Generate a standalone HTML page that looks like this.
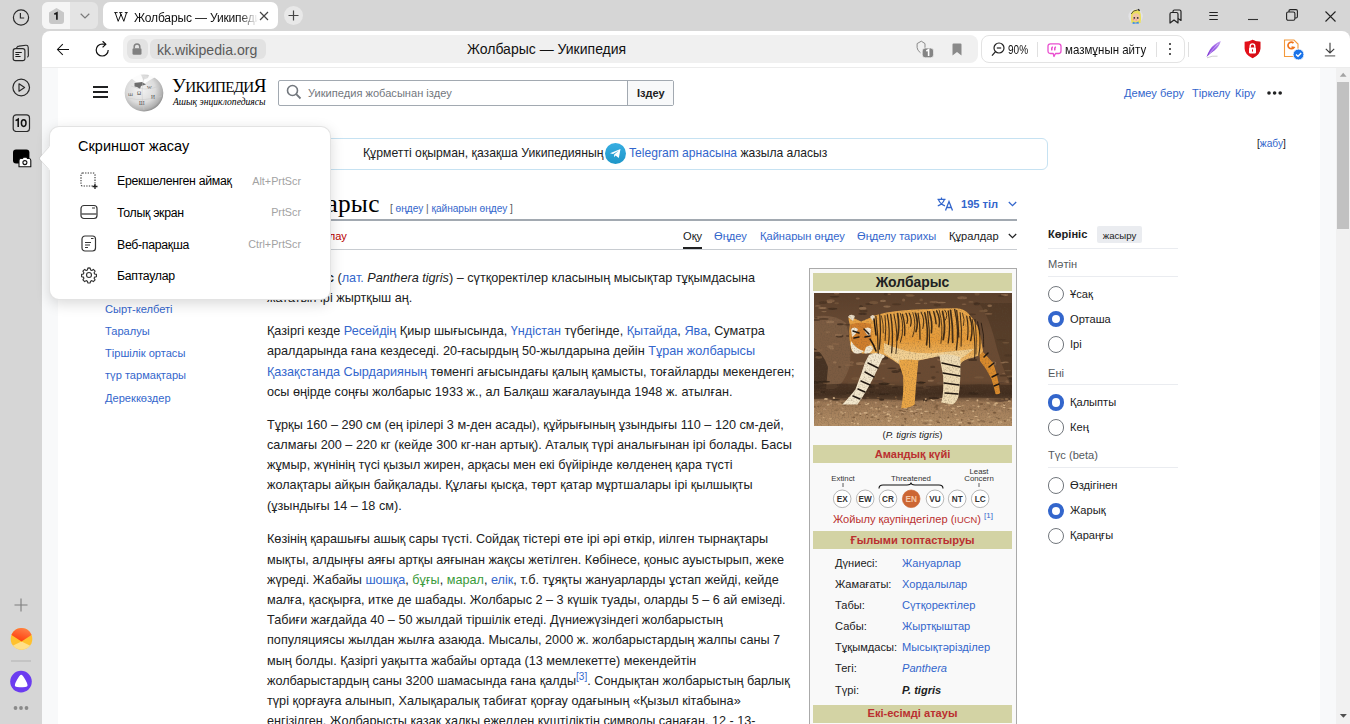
<!DOCTYPE html>
<html><head><meta charset="utf-8">
<style>
*{box-sizing:border-box}
html,body{margin:0;padding:0}
body{width:1350px;height:724px;overflow:hidden;position:relative;background:#d6d6d6;font-family:"Liberation Sans",sans-serif;color:#202122}
.abs{position:absolute}
.nw{white-space:nowrap}
a,.lk{color:#3366cc;text-decoration:none}
.g{color:#3a9a3a}
</style></head><body>

<!-- ============ LEFT SIDEBAR ============ -->
<div id="sidebar" class="abs" style="left:0;top:0;width:42px;height:724px;background:#d6d6d6">
  <svg class="abs" style="left:12px;top:9px" width="18" height="18" viewBox="0 0 18 18"><circle cx="9" cy="8.5" r="7.6" fill="none" stroke="#2a2a2a" stroke-width="1.2"/><path d="M8.4 3.9 V9 H12.2" fill="none" stroke="#2a2a2a" stroke-width="1.2"/></svg>
  <svg class="abs" style="left:12px;top:44px" width="18" height="18" viewBox="0 0 18 18"><path d="M4.4 4.3 L5.2 3 Q5.8 2.2 7 2.1 L13.8 1.3 Q16 1.1 16.2 3.2 L16.4 11.6 Q16.4 12.8 15.2 13.2" fill="none" stroke="#2a2a2a" stroke-width="1.15"/><rect x="1.2" y="4.6" width="11.7" height="12" rx="2.2" fill="#dedede" stroke="#2a2a2a" stroke-width="1.15"/><path d="M3.4 8.5 H9.8 M3.4 10.5 H7.2 M3.4 12.5 H8.6" stroke="#1a1a1a" stroke-width="1"/></svg>
  <svg class="abs" style="left:12px;top:78px" width="19" height="19" viewBox="0 0 19 19"><circle cx="9.2" cy="9.5" r="8.3" fill="none" stroke="#2a2a2a" stroke-width="1.2"/><path d="M7 5.8 L12.6 9.5 L7 13.2 Z" fill="none" stroke="#2a2a2a" stroke-width="1.2" stroke-linejoin="round"/></svg>
  <svg class="abs" style="left:12px;top:113px" width="19" height="19" viewBox="0 0 19 19"><rect x="1.2" y="1.9" width="16.3" height="16.6" rx="3" fill="none" stroke="#2a2a2a" stroke-width="1.2"/><path d="M3.6 7.6 L6.2 6.2 V14" fill="none" stroke="#111" stroke-width="1.6"/><ellipse cx="11.7" cy="10.1" rx="2.3" ry="3.3" fill="none" stroke="#111" stroke-width="1.5"/></svg>
  <svg class="abs" style="left:12px;top:149px" width="20" height="19" viewBox="0 0 20 19"><rect x="1" y="0.6" width="16.4" height="13.8" rx="3" fill="#000"/><path d="M7 17.8 V11.5 Q7 9.5 9 9.5 H10.5 L11.5 8.2 H14.5 L15.5 9.5 H17 Q18.8 9.5 18.8 11.5 V17.8 Z" fill="#fff" stroke="#111" stroke-width="1.1" stroke-linejoin="round"/><circle cx="12.9" cy="13.6" r="2" fill="none" stroke="#111" stroke-width="1.1"/></svg>
  <svg class="abs" style="left:14px;top:598px" width="14" height="14" viewBox="0 0 14 14"><path d="M7 0.5 V13.5 M0.5 7 H13.5" stroke="#7d7d7d" stroke-width="1.1"/></svg>
  <svg class="abs" style="left:10px;top:627px" width="23" height="23" viewBox="0 0 23 23"><defs><linearGradient id="mg" x1="0.8" y1="0" x2="0.3" y2="1"><stop offset="0" stop-color="#ff8a50"/><stop offset="1" stop-color="#ff3a0a"/></linearGradient><clipPath id="mc"><circle cx="11.5" cy="11.9" r="10.8"/></clipPath></defs><g clip-path="url(#mc)"><rect width="23" height="23" fill="#ffc12e"/><path d="M0 20 L11.5 14.4 L23 20 V23 H0 Z" fill="#ffe08a"/><path d="M0 0 H23 V7 L11.5 14.4 L0 7 Z" fill="url(#mg)"/></g></svg>
  <div class="abs" style="left:11px;top:660px;width:20px;height:2px;background:#c4c4c4"></div>
  <svg class="abs" style="left:10px;top:670px" width="23" height="23" viewBox="0 0 23 23"><circle cx="11" cy="11.6" r="10.8" fill="#6b3cf0"/><path d="M11.2 4.8 Q12.6 4.8 15.5 10 Q18.6 15.6 17 16.6 Q15.5 17.5 11.2 17.3 Q6.9 17.5 5.4 16.6 Q3.8 15.6 6.9 10 Q9.8 4.8 11.2 4.8 Z" fill="#fff"/></svg>
  <svg class="abs" style="left:13px;top:705px" width="16" height="6" viewBox="0 0 16 6"><circle cx="2.5" cy="3" r="1.9" fill="#8a8a8a"/><circle cx="8" cy="3" r="1.9" fill="#8a8a8a"/><circle cx="13.5" cy="3" r="1.9" fill="#8a8a8a"/></svg>
</div>

<!-- ============ TAB STRIP ============ -->
<div id="tabs" class="abs" style="left:42px;top:0;width:1308px;height:31px;background:#d6d6d6">
  <div class="abs" style="left:0;top:2px;width:56px;height:27px;border-radius:6px;background:#e4e4e4"></div>
  <div class="abs" style="left:0;top:2px;width:28px;height:27px;border-radius:6px 0 0 6px;background:#f5f5f5"></div>
  <svg class="abs" style="left:7px;top:8px" width="15" height="16" viewBox="0 0 15 16"><path d="M7.5 0 L15 4.5 V13 Q15 16 12 16 H3 Q0 16 0 13 V4.5 Z" fill="#c8c8c8"/><path d="M5.3 6.3 L7.9 5 V11.7" fill="none" stroke="#1a1a1a" stroke-width="1.7"/></svg>
  <svg class="abs" style="left:38px;top:13px" width="10" height="6" viewBox="0 0 10 6"><path d="M0.7 0.8 L5 5 L9.3 0.8" fill="none" stroke="#7a7a7a" stroke-width="1.2"/></svg>
  <div class="abs" style="left:61px;top:2px;width:175px;height:27px;border-radius:7px;background:#fff"></div>
  <svg class="abs" style="left:72px;top:12px" width="14" height="10" viewBox="0 0 14 10"><path d="M0.3 0.6 H3.6 M1.2 0.6 L4.2 9.3 L7 2.2 L9.8 9.3 L12.6 0.6 M10.8 0.6 H13.7 M5.3 0.6 H8.4 M6 0.6 L7.2 3.2" fill="none" stroke="#111" stroke-width="1"/></svg>
  <div class="abs nw" style="left:92px;top:10.5px;width:124px;overflow:hidden;font-size:12px;line-height:14px;color:#111;letter-spacing:-0.15px;-webkit-mask-image:linear-gradient(to right,#000 85%,transparent 100%)">Жолбарыс — Уикипедия</div>
  <svg class="abs" style="left:217px;top:11px" width="10" height="10" viewBox="0 0 10 10"><path d="M1 1 L9 9 M9 1 L1 9" stroke="#444" stroke-width="1.2"/></svg>
  <div class="abs" style="left:242px;top:6px;width:19px;height:19px;border-radius:50%;background:#e8e8e8"></div>
  <svg class="abs" style="left:246px;top:10px" width="11" height="11" viewBox="0 0 11 11"><path d="M5.5 0.5 V10.5 M0.5 5.5 H10.5" stroke="#444" stroke-width="1.2"/></svg>
  <!-- right window controls -->
  <svg class="abs" style="left:1086px;top:8px" width="16" height="17" viewBox="0 0 16 17"><circle cx="7.6" cy="8.3" r="7.2" fill="#e2e2e6"/><path d="M3 9 Q2.5 3 7 1.8 Q12 1 12.8 6.5 Q13.5 11 12.5 15 L3.5 15 Q2.8 12 3 9 Z" fill="#eadf5a"/><path d="M3.2 6 Q5 2 9.5 2" fill="none" stroke="#4a4438" stroke-width="0.9"/><path d="M10 1.3 L11.6 2.8" stroke="#222" stroke-width="1.4"/><path d="M4.4 10 Q4.2 5.5 8 5.3 Q11.8 5.5 11.7 10 Q11.4 13.4 8 13.6 Q4.6 13.4 4.4 10 Z" fill="#f1c6a6"/><circle cx="6.3" cy="9.9" r="0.9" fill="#333"/><circle cx="9.7" cy="9.9" r="0.9" fill="#333"/><circle cx="5.6" cy="11.4" r="0.8" fill="#ee8aa0"/><circle cx="8.2" cy="12" r="0.7" fill="#ee8aa0"/><path d="M4.8 13.8 L7.6 14.8 L10.6 13.6 L10.8 15.8 L7.6 15.4 L4.6 16 Z" fill="#3a8be8"/></svg>
  <svg class="abs" style="left:1127px;top:9px" width="14" height="15" viewBox="0 0 14 15"><path d="M1 5 Q1 3.5 2.5 3.5 H7.5 Q9 3.5 9 5 V14 L5 11 L1 14 Z" fill="none" stroke="#222" stroke-width="1.2" stroke-linejoin="round"/><path d="M4 3.5 V2.5 Q4 1 5.5 1 H10.5 Q12 1 12 2.5 V11.5 L9 9.5" fill="none" stroke="#222" stroke-width="1.2" stroke-linejoin="round"/></svg>
  <svg class="abs" style="left:1167px;top:11px" width="10" height="10" viewBox="0 0 10 10"><path d="M0.3 1.5 H8.8 M0.3 4.5 H8.8 M0.3 8.5 H8.8" stroke="#222" stroke-width="1.05"/></svg>
  <svg class="abs" style="left:1206px;top:18px" width="10" height="3" viewBox="0 0 10 3"><path d="M0 1.5 H10" stroke="#333" stroke-width="1.1"/></svg>
  <svg class="abs" style="left:1244px;top:9px" width="12" height="12" viewBox="0 0 12 12"><rect x="0.6" y="3" width="8.3" height="8.3" rx="1.5" fill="none" stroke="#222" stroke-width="1.1"/><path d="M3 3 V2 Q3 0.6 4.4 0.6 H10 Q11.4 0.6 11.4 2 V7.6 Q11.4 9 10 9 H8.9" fill="none" stroke="#222" stroke-width="1.1"/></svg>
  <svg class="abs" style="left:1283px;top:11px" width="11" height="11" viewBox="0 0 11 11"><path d="M0.5 0.5 L10.5 10.5 M10.5 0.5 L0.5 10.5" stroke="#222" stroke-width="1.1"/></svg>
</div>

<!-- ============ TOOLBAR ============ -->
<div id="toolbar" class="abs" style="left:42px;top:31px;width:1308px;height:37px;background:#fff;border-radius:8px 8px 0 0">
  <svg class="abs" style="left:14px;top:12px" width="14" height="13" viewBox="0 0 14 13"><path d="M13 6.5 H1.5 M6.8 1.2 L1.5 6.5 L6.8 11.8" fill="none" stroke="#111" stroke-width="1.05"/></svg>
  <svg class="abs" style="left:53px;top:10px" width="16" height="17" viewBox="0 0 16 17"><path d="M13.2 9 A6 6 0 1 1 7.2 3 L10.6 3.3" fill="none" stroke="#111" stroke-width="1.2"/><path d="M7.6 0.2 L10.8 3.3 L7.6 6.4" fill="none" stroke="#111" stroke-width="1.2"/></svg>
  <div class="abs" style="left:81px;top:4px;width:855px;height:28px;border-radius:8px;background:#f0f0f0"></div>
  <div class="abs" style="left:85px;top:8px;width:21px;height:20px;border-radius:6px;background:#e2e2e2"></div>
  <svg class="abs" style="left:90px;top:12px" width="10" height="12" viewBox="0 0 10 12"><path d="M2.2 5.5 V3.8 A2.8 2.8 0 0 1 7.8 3.8 V5.5" fill="none" stroke="#808080" stroke-width="1.5"/><rect x="0.5" y="5.2" width="9" height="6.5" rx="1.3" fill="#808080"/></svg>
  <div class="abs" style="left:108px;top:8px;width:116px;height:20px;border-radius:6px;background:#e2e2e2"></div>
  <div class="abs nw" style="left:115px;top:11px;font-size:14.1px;line-height:17px;color:#5a5a5a">kk.wikipedia.org</div>
  <div class="abs nw" style="left:425px;top:10px;font-size:14px;line-height:17px;color:#111">Жолбарыс — Уикипедия</div>
  <svg class="abs" style="left:873px;top:8px" width="20" height="20" viewBox="0 0 20 20"><path d="M10 10 V4.6 L6.3 2.2 L2.1 4.6 V8.5 Q2.2 11.5 5.5 13.8" fill="none" stroke="#8a8a8a" stroke-width="1"/><rect x="7.2" y="9" width="11.4" height="9.8" rx="3" fill="#858585" stroke="#f0f0f0" stroke-width="0.8"/><path d="M11.3 12 L13.6 10.6 V17" fill="none" stroke="#fff" stroke-width="1.6"/></svg>
  <svg class="abs" style="left:910px;top:12px" width="10" height="13" viewBox="0 0 10 13"><path d="M0.5 1.5 Q0.5 0.5 1.5 0.5 H8.5 Q9.5 0.5 9.5 1.5 V12.5 L5 9 L0.5 12.5 Z" fill="#8a8a8a"/></svg>
  <div class="abs" style="left:939px;top:4px;width:204px;height:28px;border-radius:8px;background:#fff;border:1px solid #e3e3e3"></div>
  <svg class="abs" style="left:949px;top:11px" width="14" height="15" viewBox="0 0 14 15"><circle cx="8" cy="6" r="5" fill="none" stroke="#222" stroke-width="1.2"/><path d="M5.8 6 H10.2" stroke="#222" stroke-width="1.2"/><path d="M4.5 9.6 L1 13.6" stroke="#222" stroke-width="1.3"/></svg>
  <div class="abs nw" style="left:966px;top:10.5px;font-size:12.4px;line-height:17px;color:#111;transform:scaleX(0.81);transform-origin:0 0">90%</div>
  <div class="abs" style="left:995px;top:11px;width:1px;height:15px;background:#e0e0e0"></div>
  <svg class="abs" style="left:1004.5px;top:12px" width="15" height="15" viewBox="0 0 15 15"><path d="M3.5 0.8 H11.5 Q14 0.8 14 3.3 V8 Q14 10.5 11.5 10.5 H8.5 L7 13.5 L6.2 10.5 H3.5 Q1 10.5 1 8 V3.3 Q1 0.8 3.5 0.8 Z" fill="none" stroke="#e94fcf" stroke-width="1.3" stroke-linejoin="round"/><path d="M5.3 4.2 Q4.5 5 4.8 6.8 M8.3 4.2 Q7.5 5 7.8 6.8" stroke="#e94fcf" stroke-width="1.6" fill="none" stroke-linecap="round"/></svg>
  <div class="abs nw" style="left:1022.5px;top:9.5px;font-size:13.6px;line-height:17px;color:#111;transform:scaleX(0.845);transform-origin:0 0">мазмұнын айту</div>
  <div class="abs" style="left:1114px;top:11px;width:1px;height:15px;background:#e0e0e0"></div>
  <svg class="abs" style="left:1126px;top:11px" width="4" height="14" viewBox="0 0 4 14"><circle cx="2" cy="2" r="1" fill="#222"/><circle cx="2" cy="7" r="1" fill="#222"/><circle cx="2" cy="12" r="1" fill="#222"/></svg>
  <div class="abs" style="left:1146px;top:11px;width:1px;height:15px;background:#e0e0e0"></div>
  <svg class="abs" style="left:1163px;top:9px" width="18" height="19" viewBox="0 0 18 19"><defs><linearGradient id="fg" x1="0" y1="1" x2="1" y2="0"><stop offset="0" stop-color="#7a2fd0"/><stop offset="0.55" stop-color="#9b5ee6"/><stop offset="1" stop-color="#c9a8f2"/></linearGradient></defs><path d="M15.8 1 Q9 3.5 5 9.5 Q2.5 13.5 1.5 17 Q5.5 13 9.5 10.5 Q14.5 6.5 15.8 1 Z" fill="url(#fg)"/><path d="M13 4 Q9 8 4.5 13.5" stroke="#e6d6fa" stroke-width="0.6" fill="none"/><path d="M2 17.8 Q7 15.5 12.5 16.2" stroke="#d0d0d0" stroke-width="1" fill="none"/></svg>
  <svg class="abs" style="left:1202px;top:8px" width="18" height="20" viewBox="0 0 18 20"><path d="M8.5 0.8 Q12 2.8 16.4 2.8 V9.5 Q16.4 15.5 8.5 19.2 Q0.6 15.5 0.6 9.5 V2.8 Q5 2.8 8.5 0.8 Z" fill="#e3101a"/><path d="M8.5 0.8 Q12 2.8 16.4 2.8 V9.5 Q16.4 15.5 8.5 19.2 Z" fill="#c80a12" opacity="0.5"/><path d="M6.2 8.8 V7.2 A2.3 2.3 0 0 1 10.8 7.2 V8.8" fill="none" stroke="#fff" stroke-width="1.4"/><rect x="5" y="8.6" width="7" height="5.8" rx="0.8" fill="#fff"/><rect x="8" y="10.4" width="1" height="2.2" fill="#e3101a"/></svg>
  <svg class="abs" style="left:1241px;top:8px" width="22" height="22" viewBox="0 0 22 22"><path d="M1.5 1 H11 L15 5 V17.5 H1.5 Z" fill="#fff" stroke="#f39a3c" stroke-width="1.1"/><path d="M10.5 4 A3.3 3.3 0 1 0 10.8 8.6 L8.5 8.2" fill="none" stroke="#f0741b" stroke-width="1.7"/><circle cx="15.5" cy="15.5" r="5.5" fill="#1a73e8" stroke="#fff" stroke-width="1"/><path d="M13 15.5 L15 17.3 L18.2 14" fill="none" stroke="#fff" stroke-width="1.3"/></svg>
  <svg class="abs" style="left:1282px;top:11px" width="12" height="15" viewBox="0 0 12 15"><path d="M6 0.8 V11 M1.8 6.8 L6 11 L10.2 6.8" fill="none" stroke="#3a3a3a" stroke-width="1.1"/><path d="M0.8 13.9 H11.2" stroke="#5a5a5a" stroke-width="1.1"/></svg>
</div>
<div class="abs" style="left:42px;top:67px;width:1308px;height:1px;background:#ececec"></div>

<!-- ============ PAGE ============ -->
<div id="page" class="abs" style="left:42px;top:68px;width:1294px;height:656px;background:#fff;overflow:hidden">
  <div class="abs" style="left:0;top:0;width:16px;height:656px;background:#f8f9fa"></div>
  <div class="abs" style="left:1278px;top:0;width:16px;height:656px;background:#f8f9fa"></div>
</div>
<!-- scrollbar -->
<div class="abs" style="left:1336px;top:68px;width:14px;height:656px;background:#f1f1f1">
  <div class="abs" style="left:1.2px;top:13.7px;width:11.6px;height:147.5px;background:#c1c1c1"></div>
  <svg class="abs" style="left:0;top:0" width="14" height="14" viewBox="0 0 14 14"><path d="M3.8 8.8 H10.6 L7.2 4.8 Z" fill="#a3a3a3"/></svg>
  <svg class="abs" style="left:0;top:642px" width="14" height="14" viewBox="0 0 14 14"><path d="M3.9 4 H10.9 L7.4 7.8 Z" fill="#505050"/></svg>
</div>


<!-- ============ WIKI HEADER ============ -->
<div id="wiki" style="position:absolute;left:0;top:0;width:1350px;height:724px;pointer-events:none">
  <!-- hamburger -->
  <div class="abs" style="left:93px;top:86px;width:15px;height:2px;background:#202122"></div>
  <div class="abs" style="left:93px;top:91px;width:15px;height:2px;background:#202122"></div>
  <div class="abs" style="left:93px;top:96px;width:15px;height:2px;background:#202122"></div>
  <!-- globe -->
  <svg class="abs" style="left:122px;top:72px" width="44" height="42" viewBox="0 0 44 42"><defs><radialGradient id="gl" cx="0.42" cy="0.4" r="0.62"><stop offset="0" stop-color="#f4f4f4"/><stop offset="0.6" stop-color="#dcdcdc"/><stop offset="0.9" stop-color="#b0b0b0"/><stop offset="1" stop-color="#8c8c8c"/></radialGradient></defs><ellipse cx="22" cy="21" rx="19.3" ry="18.5" fill="url(#gl)"/><path d="M9 6 Q14 1.5 19 2.5 L21 8 L26 6 L27 3 Q32 2.5 34.5 4.5 L28 8 L22 12 L14 10 Z" fill="#fff" opacity="0.9"/><path d="M12.5 11 L20 10 L24 12.5 L19 14 L18 17 L15 15 L12.5 14.5 Z" fill="#6e6e6e"/><g font-family="Liberation Serif" fill="#444" font-size="5.5"><text x="15" y="23">Ω</text><text x="25" y="17" font-size="5">W</text><text x="29" y="27">И</text><text x="17" y="33">Ш</text><text x="6" y="24" font-size="4.5">ա</text></g><path d="M9 14 Q22 20 38 14 M6 26 Q22 30 40 24 M22 5 Q18 20 22 38" fill="none" stroke="#c8c8c8" stroke-width="0.5"/></svg>
  <!-- wordmark -->
  <div class="abs nw" style="left:172px;top:75px;font-family:'Liberation Serif',serif;line-height:22px;color:#000;letter-spacing:-0.7px"><span style="font-size:19.6px">У</span><span style="font-size:15.1px">ИКИПЕДИ</span><span style="font-size:19.6px">Я</span></div>
  <div class="abs nw" style="left:173px;top:96px;font-family:'Liberation Serif',serif;font-style:italic;font-size:9.6px;line-height:12px;color:#000">Ашық энциклопедиясы</div>
  <!-- search -->
  <div class="abs" style="left:278px;top:80px;width:396px;height:26px;border:1px solid #a2a9b1;border-radius:2px;background:#fff"></div>
  <div class="abs" style="left:627px;top:81px;width:46px;height:24px;border-left:1px solid #a2a9b1;background:#f8f9fa"></div>
  <div class="abs nw" style="left:308px;top:86px;font-size:11.1px;line-height:14px;color:#72777d">Уикипедия жобасынан іздеу</div>
  <div class="abs nw" style="left:637px;top:86px;font-size:11px;line-height:14px;color:#202122;font-weight:bold">Іздеу</div>
  <svg class="abs" style="left:286px;top:84px" width="16" height="16" viewBox="0 0 16 16"><circle cx="6.5" cy="6.5" r="5" fill="none" stroke="#72777d" stroke-width="1.6"/><line x1="10.2" y1="10.2" x2="14.5" y2="14.5" stroke="#72777d" stroke-width="1.8"/></svg>
  <!-- user links -->
  <div class="abs nw" style="left:1124px;top:86px;font-size:11.1px;line-height:14px;color:#3366cc">Демеу беру</div>
  <div class="abs nw" style="left:1192px;top:86px;font-size:11.1px;line-height:14px;color:#3366cc">Тіркелу</div>
  <div class="abs nw" style="left:1235px;top:86px;font-size:11.1px;line-height:14px;color:#3366cc">Кіру</div>
  <svg class="abs" style="left:1266px;top:90px" width="18" height="6" viewBox="0 0 18 6"><circle cx="3" cy="3" r="1.8" fill="#202122"/><circle cx="8.6" cy="3" r="1.8" fill="#202122"/><circle cx="14.2" cy="3" r="1.8" fill="#202122"/></svg>

  <!-- site notice -->
  <div class="abs" style="left:144px;top:138px;width:904px;height:32px;border:1px solid #c6e2f2;border-radius:6px;background:#fff"></div>
  <div class="abs nw" style="left:363px;top:145px;font-size:12.22px;line-height:16px;color:#202122">Құрметті оқырман, қазақша Уикипедияның</div>
  <div class="abs" style="left:605px;top:143px;width:21px;height:21px;border-radius:50%;background:linear-gradient(#37aee2,#1e96c8)"></div>
  <svg class="abs" style="left:605px;top:143px" width="21" height="21" viewBox="0 0 21 21"><path d="M5 10.3 L15.5 6 L13.8 15 L10.5 12.6 L9 14.2 L9.2 11.6 L14 7.5 L8 11 Z" fill="#fff"/></svg>
  <div class="abs nw" style="left:629px;top:145px;font-size:12.1px;line-height:16px;color:#3366cc">Telegram арнасына <span style="color:#202122">жазыла аласыз</span></div>
  <div class="abs nw" style="left:1257px;top:137px;font-size:10.2px;line-height:14px;color:#202122">[<span style="color:#3366cc">жабу</span>]</div>

  <!-- title -->
  <div class="abs nw" style="left:266px;top:187.9px;font-family:'Liberation Serif',serif;font-size:25.4px;line-height:30px;color:#000;letter-spacing:0.25px">Жолбарыс</div>
  <div class="abs nw" style="left:390px;top:202px;font-size:10.1px;line-height:14px;color:#54595d">[ <span style="color:#3366cc">өңдеу</span> | <span style="color:#3366cc">қайнарын өңдеу</span> ]</div>
  <div class="abs" style="left:266px;top:219px;width:751px;height:2px;background:#a2a9b1"></div>
  <!-- lang -->
  <svg class="abs" style="left:937px;top:197px" width="17" height="14" viewBox="0 0 17 14"><path d="M0.5 2.3 H8.5 M4.5 0.5 V2.3 M1.5 2.8 Q3.5 7.5 8 8.8 M7.3 2.8 Q5.5 7.5 0.8 8.8" fill="none" stroke="#3366cc" stroke-width="1.2"/><path d="M8.5 13.5 L12 4.5 L15.5 13.5 M9.7 10.5 H14.3" fill="none" stroke="#3366cc" stroke-width="1.3"/></svg>
  <div class="abs nw" style="left:961px;top:196px;font-size:11.1px;line-height:16px;color:#3366cc;font-weight:bold">195 тіл</div>
  <svg class="abs" style="left:1008px;top:201px" width="9" height="6" viewBox="0 0 9 6"><path d="M0.8 1 L4.5 4.7 L8.2 1" fill="none" stroke="#3366cc" stroke-width="1.3"/></svg>

  <!-- tabs -->
  <div class="abs nw" style="left:297px;top:228.2px;font-size:11.1px;line-height:16px;color:#ba0000">Талқылау</div>
  <div class="abs nw" style="left:683px;top:228.2px;font-size:11.1px;line-height:16px;color:#202122">Оқу</div>
  <div class="abs nw" style="left:714px;top:228.2px;font-size:11.1px;line-height:16px;color:#3366cc">Өңдеу</div>
  <div class="abs nw" style="left:760px;top:228.2px;font-size:11.1px;line-height:16px;color:#3366cc">Қайнарын өңдеу</div>
  <div class="abs nw" style="left:857px;top:228.2px;font-size:11.1px;line-height:16px;color:#3366cc">Өңделу тарихы</div>
  <div class="abs nw" style="left:949px;top:228.2px;font-size:11.1px;line-height:16px;color:#202122">Құралдар</div>
  <svg class="abs" style="left:1008px;top:233px" width="9" height="6" viewBox="0 0 9 6"><path d="M0.8 1 L4.5 4.7 L8.2 1" fill="none" stroke="#202122" stroke-width="1.2"/></svg>
  <div class="abs" style="left:266px;top:249px;width:751px;height:1px;background:#c8ccd1"></div>
  <div class="abs" style="left:683px;top:247px;width:19px;height:2px;background:#202122"></div>

  <!-- TOC -->
  <div class="abs nw" style="left:105px;top:275.5px;font-size:11.1px;line-height:22.2px;color:#3366cc">Кіріспе<br>Сырт-келбеті<br>Таралуы<br>Тіршілік ортасы<br>түр тармақтары<br>Дереккөздер</div>

  <!-- body -->
  <div class="abs nw" style="left:267px;top:268px;font-size:12.66px;line-height:20.16px;color:#202122">
    <div><b>Жолбарыс</b> (<a>лат.</a> <i>Panthera tigris</i>) – сүтқоректілер класының мысықтар тұқымдасына</div>
    <div>жататын ірі жыртқыш аң.</div>
  </div>
  <div class="abs nw" style="left:267px;top:321.3px;font-size:12.66px;line-height:20.16px;color:#202122">
    <div>Қазіргі кезде <a>Ресейдің</a> Қиыр шығысында, <a>Үндістан</a> түбегінде, <a>Қытайда</a>, <a>Ява</a>, Суматра</div>
    <div>аралдарында ғана кездеседі. 20-ғасырдың 50-жылдарына дейін <a>Тұран жолбарысы</a></div>
    <div><a>Қазақстанда Сырдарияның</a> төменгі ағысындағы қалың қамысты, тоғайларды мекендеген;</div>
    <div>осы өңірде соңғы жолбарыс 1933 ж., ал Балқаш жағалауында 1948 ж. атылған.</div>
  </div>
  <div class="abs nw" style="left:267px;top:414.9px;font-size:12.66px;line-height:20.16px;color:#202122">
    <div>Тұрқы 160 – 290 см (ең ірілері 3 м-ден асады), құйрығының ұзындығы 110 – 120 см-дей,</div>
    <div>салмағы 200 – 220 кг (кейде 300 кг-нан артық). Аталық түрі аналығынан ірі болады. Басы</div>
    <div>жұмыр, жүнінің түсі қызыл жирен, арқасы мен екі бүйірінде көлденең қара түсті</div>
    <div>жолақтары айқын байқалады. Құлағы қысқа, төрт қатар мұртшалары ірі қылшықты</div>
    <div>(ұзындығы 14 – 18 см).</div>
  </div>
  <div class="abs nw" style="left:267px;top:529.4px;font-size:12.66px;line-height:20.2px;color:#202122">
    <div>Көзінің қарашығы ашық сары түсті. Сойдақ тістері өте ірі әрі өткір, иілген тырнақтары</div>
    <div>мықты, алдыңғы аяғы артқы аяғынан жақсы жетілген. Көбінесе, қоныс ауыстырып, жеке</div>
    <div>жүреді. Жабайы <a>шошқа</a>, <span class="g">бұғы</span>, <span class="g">марал</span>, <a>елік</a>, т.б. тұяқты жануарларды ұстап жейді, кейде</div>
    <div>малға, қасқырға, итке де шабады. Жолбарыс 2 – 3 күшік туады, оларды 5 – 6 ай емізеді.</div>
    <div>Табиғи жағдайда 40 – 50 жылдай тіршілік етеді. Дүниежүзіндегі жолбарыстың</div>
    <div>популяциясы жылдан жылға азаюда. Мысалы, 2000 ж. жолбарыстардың жалпы саны 7</div>
    <div>мың болды. Қазіргі уақытта жабайы ортада (13 мемлекетте) мекендейтін</div>
    <div>жолбарыстардың саны 3200 шамасында ғана қалды<sup style="font-size:10px;line-height:0;color:#3366cc">[3]</sup>. Сондықтан жолбарыстың барлық</div>
    <div>түрі қорғауға алынып, Халықаралық табиғат қорғау одағының «Қызыл кітабына»</div>
    <div>енгізілген. Жолбарысты қазақ халқы ежелден күштіліктің символы санаған. 12 - 13-</div>
  </div>
</div>


<!-- ============ INFOBOX ============ -->
<div class="abs" style="left:809px;top:268px;width:208px;height:470px;border:1px solid #aaa;background:#f9f9f9"></div>
<div class="abs" style="left:813px;top:273px;width:199px;height:18px;background:#d3d3a4"></div>
<div class="abs nw" style="left:813px;top:273px;width:199px;text-align:center;font-size:13.9px;line-height:18px;font-weight:bold;color:#202122">Жолбарыс</div>
<svg class="abs" style="left:814px;top:293px;filter:blur(0.3px)" width="198" height="133" viewBox="0 0 198 133">
  <defs><filter id="grain2" x="0" y="0" width="100%" height="100%"><feTurbulence type="fractalNoise" baseFrequency="0.7" numOctaves="2" seed="9"/><feColorMatrix type="matrix" values="0 0 0 0 0.1  0 0 0 0 0.07  0 0 0 0 0.04  0 0 0 -2.2 1.2"/></filter><filter id="grain" x="0" y="0" width="100%" height="100%"><feTurbulence type="fractalNoise" baseFrequency="0.55" numOctaves="2" seed="4" result="n"/><feColorMatrix in="n" type="matrix" values="0 0 0 0 0  0 0 0 0 0  0 0 0 0 0  0 0 0 -1.6 1.05" result="a"/><feComposite in="SourceGraphic" in2="a" operator="in" result="d"/><feBlend in="d" in2="SourceGraphic" mode="multiply"/></filter>
    <linearGradient id="bgg" x1="0" y1="0" x2="0" y2="1">
      <stop offset="0" stop-color="#5a3f2b"/>
      <stop offset="0.3" stop-color="#6a4b34"/>
      <stop offset="0.66" stop-color="#6a4a32"/>
      <stop offset="0.76" stop-color="#4a3424"/>
      <stop offset="0.82" stop-color="#9a7654"/>
      <stop offset="1" stop-color="#b38e66"/>
    </linearGradient>
    <linearGradient id="tg" x1="0" y1="0" x2="0" y2="1">
      <stop offset="0" stop-color="#eaa84c"/>
      <stop offset="0.55" stop-color="#e59a38"/>
      <stop offset="1" stop-color="#f0bf72"/>
    </linearGradient>
  </defs>
  <rect width="198" height="133" fill="url(#bgg)"/>
  <path d="M0 24 Q18 20 32 30 Q38 50 36 72 Q30 92 20 96 L0 96 Z" fill="#7e5e44" opacity="0.85"/>
  <path d="M0 55 Q8 58 14 74 L12 96 L0 96 Z" fill="#3a281b" opacity="0.8"/>
  <path d="M165 10 H198 V96 Q186 70 180 44 Q174 22 165 10 Z" fill="#4a3322" opacity="0.6"/>
  <ellipse cx="89.6" cy="53.2" rx="4.7" ry="1.1" fill="#7a5a3e" opacity="0.75"/><ellipse cx="169.3" cy="18.0" rx="4.3" ry="1.1" fill="#7a5a3e" opacity="0.75"/><ellipse cx="157.0" cy="8.9" rx="2.6" ry="0.7" fill="#8a6648" opacity="0.75"/><ellipse cx="117.9" cy="37.6" rx="3.1" ry="1.3" fill="#4a3322" opacity="0.75"/><ellipse cx="123.4" cy="79.0" rx="1.7" ry="0.6" fill="#4a3322" opacity="0.75"/><ellipse cx="118.7" cy="73.9" rx="2.6" ry="1.2" fill="#4a3322" opacity="0.75"/><ellipse cx="102.8" cy="60.8" rx="3.2" ry="1.3" fill="#3c2a1c" opacity="0.75"/><ellipse cx="129.7" cy="38.6" rx="3.4" ry="1.5" fill="#8a6648" opacity="0.75"/><ellipse cx="140.1" cy="30.0" rx="2.3" ry="0.9" fill="#8a6648" opacity="0.75"/><ellipse cx="111.5" cy="10.3" rx="1.9" ry="0.9" fill="#8a6648" opacity="0.75"/><ellipse cx="189.7" cy="80.5" rx="1.5" ry="0.8" fill="#8a6648" opacity="0.75"/><ellipse cx="93.1" cy="93.1" rx="2.9" ry="0.7" fill="#4a3322" opacity="0.75"/><ellipse cx="154.1" cy="25.6" rx="1.8" ry="0.9" fill="#3c2a1c" opacity="0.75"/><ellipse cx="150.1" cy="11.2" rx="2.4" ry="0.7" fill="#8a6648" opacity="0.75"/><ellipse cx="92.1" cy="46.2" rx="3.9" ry="0.8" fill="#7a5a3e" opacity="0.75"/><ellipse cx="37.8" cy="69.5" rx="2.0" ry="1.2" fill="#8a6648" opacity="0.75"/><ellipse cx="78.2" cy="94.1" rx="1.5" ry="1.5" fill="#7a5a3e" opacity="0.75"/><ellipse cx="60.2" cy="84.1" rx="2.2" ry="1.0" fill="#7a5a3e" opacity="0.75"/><ellipse cx="127.1" cy="9.5" rx="5.0" ry="0.8" fill="#9a7656" opacity="0.75"/><ellipse cx="1.9" cy="58.0" rx="4.4" ry="1.0" fill="#8a6648" opacity="0.75"/><ellipse cx="17.8" cy="55.4" rx="2.4" ry="1.2" fill="#9a7656" opacity="0.75"/><ellipse cx="123.2" cy="12.1" rx="3.6" ry="1.4" fill="#4a3322" opacity="0.75"/><ellipse cx="171.6" cy="17.4" rx="2.0" ry="1.5" fill="#7a5a3e" opacity="0.75"/><ellipse cx="49.4" cy="18.0" rx="4.1" ry="1.5" fill="#4a3322" opacity="0.75"/><ellipse cx="136.0" cy="36.9" rx="3.2" ry="0.7" fill="#8a6648" opacity="0.75"/><ellipse cx="20.6" cy="3.7" rx="4.9" ry="0.8" fill="#3c2a1c" opacity="0.75"/><ellipse cx="50.9" cy="78.3" rx="3.6" ry="0.9" fill="#4a3322" opacity="0.75"/><ellipse cx="184.0" cy="92.8" rx="1.9" ry="1.1" fill="#7a5a3e" opacity="0.75"/><ellipse cx="121.6" cy="26.6" rx="4.7" ry="0.8" fill="#8a6648" opacity="0.75"/><ellipse cx="13.7" cy="39.1" rx="2.4" ry="0.6" fill="#9a7656" opacity="0.75"/><ellipse cx="73.0" cy="54.4" rx="2.0" ry="1.0" fill="#3c2a1c" opacity="0.75"/><ellipse cx="194.1" cy="62.4" rx="3.9" ry="1.2" fill="#4a3322" opacity="0.75"/><ellipse cx="116.8" cy="87.7" rx="3.2" ry="1.0" fill="#9a7656" opacity="0.75"/><ellipse cx="190.6" cy="2.0" rx="3.7" ry="1.1" fill="#9a7656" opacity="0.75"/><ellipse cx="63.1" cy="94.9" rx="1.8" ry="1.1" fill="#8a6648" opacity="0.75"/><ellipse cx="178.2" cy="70.0" rx="4.0" ry="1.4" fill="#9a7656" opacity="0.75"/><ellipse cx="69.7" cy="65.1" rx="4.7" ry="1.5" fill="#3c2a1c" opacity="0.75"/><ellipse cx="187.0" cy="2.9" rx="3.2" ry="0.6" fill="#3c2a1c" opacity="0.75"/><ellipse cx="75.1" cy="1.2" rx="1.8" ry="0.7" fill="#8a6648" opacity="0.75"/><ellipse cx="196.7" cy="83.6" rx="4.0" ry="1.0" fill="#7a5a3e" opacity="0.75"/><ellipse cx="90.6" cy="43.9" rx="3.4" ry="1.1" fill="#7a5a3e" opacity="0.75"/><ellipse cx="5.9" cy="57.1" rx="3.2" ry="0.8" fill="#8a6648" opacity="0.75"/><ellipse cx="98.5" cy="58.4" rx="4.7" ry="0.9" fill="#8a6648" opacity="0.75"/><ellipse cx="72.9" cy="13.6" rx="3.6" ry="1.1" fill="#9a7656" opacity="0.75"/><ellipse cx="130.7" cy="42.0" rx="4.6" ry="0.9" fill="#9a7656" opacity="0.75"/><ellipse cx="39.3" cy="40.9" rx="4.3" ry="1.5" fill="#4a3322" opacity="0.75"/><ellipse cx="76.1" cy="55.4" rx="2.6" ry="0.7" fill="#3c2a1c" opacity="0.75"/><ellipse cx="69.4" cy="85.1" rx="1.6" ry="0.7" fill="#9a7656" opacity="0.75"/><ellipse cx="162.7" cy="10.7" rx="3.1" ry="1.5" fill="#3c2a1c" opacity="0.75"/><ellipse cx="75.7" cy="49.4" rx="3.9" ry="1.3" fill="#7a5a3e" opacity="0.75"/><ellipse cx="89.6" cy="7.1" rx="1.6" ry="1.5" fill="#8a6648" opacity="0.75"/><ellipse cx="134.3" cy="26.7" rx="2.7" ry="1.2" fill="#7a5a3e" opacity="0.75"/><ellipse cx="3.8" cy="12.9" rx="3.1" ry="0.6" fill="#9a7656" opacity="0.75"/><ellipse cx="47.0" cy="13.4" rx="1.7" ry="1.2" fill="#3c2a1c" opacity="0.75"/><ellipse cx="21.6" cy="50.9" rx="3.7" ry="1.0" fill="#8a6648" opacity="0.75"/><ellipse cx="135.5" cy="18.9" rx="3.2" ry="0.8" fill="#8a6648" opacity="0.75"/><ellipse cx="149.5" cy="50.8" rx="1.6" ry="0.8" fill="#9a7656" opacity="0.75"/><ellipse cx="106.9" cy="89.9" rx="3.3" ry="1.6" fill="#4a3322" opacity="0.75"/><ellipse cx="77.9" cy="75.2" rx="4.7" ry="0.7" fill="#3c2a1c" opacity="0.75"/><ellipse cx="25.7" cy="43.1" rx="3.7" ry="1.5" fill="#3c2a1c" opacity="0.75"/><ellipse cx="108.9" cy="62.0" rx="3.3" ry="1.4" fill="#9a7656" opacity="0.75"/><ellipse cx="91.8" cy="61.9" rx="2.2" ry="1.3" fill="#8a6648" opacity="0.75"/><ellipse cx="42.2" cy="85.5" rx="4.9" ry="1.6" fill="#7a5a3e" opacity="0.75"/><ellipse cx="193.4" cy="88.6" rx="2.4" ry="1.3" fill="#8a6648" opacity="0.75"/><ellipse cx="69.0" cy="7.9" rx="3.0" ry="1.2" fill="#9a7656" opacity="0.75"/><ellipse cx="96.5" cy="2.7" rx="4.3" ry="0.7" fill="#8a6648" opacity="0.75"/><ellipse cx="34.2" cy="31.8" rx="4.3" ry="0.7" fill="#4a3322" opacity="0.75"/><ellipse cx="198.0" cy="85.6" rx="3.3" ry="1.3" fill="#3c2a1c" opacity="0.75"/><ellipse cx="187.3" cy="46.8" rx="4.8" ry="0.7" fill="#4a3322" opacity="0.75"/><ellipse cx="87.0" cy="53.1" rx="4.4" ry="1.2" fill="#4a3322" opacity="0.75"/><ellipse cx="103.5" cy="80.1" rx="3.5" ry="0.9" fill="#3c2a1c" opacity="0.75"/><ellipse cx="189.0" cy="82.7" rx="3.6" ry="0.9" fill="#4a3322" opacity="0.75"/><ellipse cx="191.8" cy="49.8" rx="3.5" ry="0.8" fill="#7a5a3e" opacity="0.75"/><ellipse cx="22.6" cy="0.5" rx="2.8" ry="1.1" fill="#8a6648" opacity="0.75"/><ellipse cx="102.2" cy="38.1" rx="4.3" ry="1.2" fill="#3c2a1c" opacity="0.75"/><ellipse cx="18.5" cy="15.8" rx="4.8" ry="1.1" fill="#3c2a1c" opacity="0.75"/><ellipse cx="53.3" cy="45.0" rx="1.9" ry="1.0" fill="#3c2a1c" opacity="0.75"/><ellipse cx="103.9" cy="10.3" rx="3.0" ry="0.6" fill="#9a7656" opacity="0.75"/><ellipse cx="25.6" cy="74.0" rx="1.6" ry="0.8" fill="#4a3322" opacity="0.75"/><ellipse cx="2.3" cy="27.0" rx="4.0" ry="0.8" fill="#3c2a1c" opacity="0.75"/><ellipse cx="20.8" cy="69.4" rx="1.9" ry="1.1" fill="#9a7656" opacity="0.75"/><ellipse cx="142.1" cy="66.6" rx="4.6" ry="0.6" fill="#3c2a1c" opacity="0.75"/><ellipse cx="163.4" cy="58.5" rx="3.4" ry="1.5" fill="#7a5a3e" opacity="0.75"/><ellipse cx="126.4" cy="50.3" rx="4.5" ry="1.2" fill="#4a3322" opacity="0.75"/><ellipse cx="46.1" cy="70.4" rx="4.3" ry="1.5" fill="#9a7656" opacity="0.75"/><ellipse cx="119.4" cy="84.6" rx="2.2" ry="1.4" fill="#4a3322" opacity="0.75"/><ellipse cx="175.7" cy="12.7" rx="2.3" ry="1.3" fill="#9a7656" opacity="0.75"/><ellipse cx="76.8" cy="41.3" rx="4.8" ry="1.1" fill="#4a3322" opacity="0.75"/><ellipse cx="39.7" cy="59.7" rx="4.3" ry="0.7" fill="#7a5a3e" opacity="0.75"/><ellipse cx="135.1" cy="86.6" rx="4.9" ry="0.7" fill="#7a5a3e" opacity="0.75"/><ellipse cx="125.7" cy="32.6" rx="5.0" ry="1.4" fill="#8a6648" opacity="0.75"/><ellipse cx="95.5" cy="2.3" rx="4.2" ry="1.2" fill="#7a5a3e" opacity="0.75"/><ellipse cx="95.3" cy="18.0" rx="1.9" ry="0.8" fill="#4a3322" opacity="0.75"/><ellipse cx="196.1" cy="88.1" rx="1.8" ry="0.7" fill="#3c2a1c" opacity="0.75"/><ellipse cx="15.4" cy="9.2" rx="2.9" ry="1.0" fill="#9a7656" opacity="0.75"/><ellipse cx="85.2" cy="57.1" rx="1.5" ry="1.3" fill="#4a3322" opacity="0.75"/><ellipse cx="35.9" cy="43.1" rx="4.1" ry="1.0" fill="#4a3322" opacity="0.75"/><ellipse cx="119.8" cy="9.0" rx="4.3" ry="0.9" fill="#8a6648" opacity="0.75"/><ellipse cx="158.7" cy="66.9" rx="4.5" ry="1.2" fill="#3c2a1c" opacity="0.75"/><ellipse cx="112.8" cy="18.1" rx="3.5" ry="0.9" fill="#9a7656" opacity="0.75"/><ellipse cx="55.3" cy="11.0" rx="4.1" ry="0.8" fill="#3c2a1c" opacity="0.75"/><ellipse cx="26.4" cy="31.3" rx="3.4" ry="1.0" fill="#3c2a1c" opacity="0.75"/><ellipse cx="151.5" cy="38.5" rx="4.0" ry="0.7" fill="#9a7656" opacity="0.75"/><ellipse cx="59.7" cy="9.6" rx="4.6" ry="1.6" fill="#7a5a3e" opacity="0.75"/><ellipse cx="9.8" cy="25.9" rx="4.9" ry="0.9" fill="#4a3322" opacity="0.75"/><ellipse cx="130.6" cy="54.1" rx="3.4" ry="1.0" fill="#3c2a1c" opacity="0.75"/><ellipse cx="127.2" cy="66.6" rx="4.2" ry="1.6" fill="#8a6648" opacity="0.75"/><ellipse cx="22.7" cy="10.3" rx="2.3" ry="1.0" fill="#7a5a3e" opacity="0.75"/><ellipse cx="10.0" cy="18.6" rx="2.8" ry="0.7" fill="#9a7656" opacity="0.75"/><ellipse cx="54.6" cy="32.4" rx="3.4" ry="1.0" fill="#7a5a3e" opacity="0.75"/><ellipse cx="112.5" cy="94.5" rx="3.7" ry="1.4" fill="#8a6648" opacity="0.75"/><ellipse cx="108.8" cy="63.5" rx="4.8" ry="1.0" fill="#4a3322" opacity="0.75"/><ellipse cx="76.4" cy="92.2" rx="4.5" ry="1.1" fill="#7a5a3e" opacity="0.75"/><ellipse cx="11.6" cy="89.8" rx="3.0" ry="1.1" fill="#7a5a3e" opacity="0.75"/><ellipse cx="61.9" cy="50.4" rx="3.2" ry="0.9" fill="#9a7656" opacity="0.75"/><ellipse cx="131.4" cy="71.0" rx="1.6" ry="1.4" fill="#7a5a3e" opacity="0.75"/><ellipse cx="8.5" cy="14.9" rx="4.1" ry="1.0" fill="#9a7656" opacity="0.75"/><ellipse cx="148.2" cy="4.8" rx="5.0" ry="1.5" fill="#8a6648" opacity="0.75"/><ellipse cx="157.9" cy="21.3" rx="4.0" ry="0.9" fill="#4a3322" opacity="0.75"/><ellipse cx="9.0" cy="9.4" rx="4.3" ry="1.5" fill="#4a3322" opacity="0.75"/><ellipse cx="193.8" cy="77.6" rx="3.6" ry="0.7" fill="#7a5a3e" opacity="0.75"/><ellipse cx="82.6" cy="11.2" rx="4.5" ry="1.0" fill="#4a3322" opacity="0.75"/><ellipse cx="24.6" cy="42.1" rx="3.8" ry="1.1" fill="#9a7656" opacity="0.75"/><ellipse cx="126.6" cy="64.8" rx="2.8" ry="1.3" fill="#4a3322" opacity="0.75"/><ellipse cx="188.6" cy="69.8" rx="2.3" ry="0.7" fill="#9a7656" opacity="0.75"/><ellipse cx="155.3" cy="59.4" rx="2.8" ry="0.9" fill="#7a5a3e" opacity="0.75"/><ellipse cx="138.4" cy="18.1" rx="2.5" ry="0.8" fill="#4a3322" opacity="0.75"/><ellipse cx="99.4" cy="62.0" rx="2.2" ry="1.3" fill="#8a6648" opacity="0.75"/><ellipse cx="1.9" cy="24.7" rx="1.6" ry="0.6" fill="#4a3322" opacity="0.75"/><ellipse cx="107.2" cy="6.9" rx="1.8" ry="1.3" fill="#7a5a3e" opacity="0.75"/><ellipse cx="46.5" cy="93.2" rx="3.2" ry="1.0" fill="#9a7656" opacity="0.75"/><ellipse cx="68.1" cy="70.8" rx="4.4" ry="0.7" fill="#8a6648" opacity="0.75"/><ellipse cx="88.6" cy="78.1" rx="4.4" ry="1.4" fill="#3c2a1c" opacity="0.75"/><ellipse cx="84.0" cy="24.5" rx="4.3" ry="1.0" fill="#7a5a3e" opacity="0.75"/><ellipse cx="64.4" cy="52.1" rx="4.1" ry="1.5" fill="#3c2a1c" opacity="0.75"/><ellipse cx="129.5" cy="55.2" rx="3.1" ry="0.9" fill="#7a5a3e" opacity="0.75"/><ellipse cx="16.4" cy="53.6" rx="3.2" ry="1.3" fill="#9a7656" opacity="0.75"/><ellipse cx="163.1" cy="0.9" rx="2.6" ry="1.5" fill="#7a5a3e" opacity="0.75"/><ellipse cx="16.2" cy="28.9" rx="4.0" ry="1.3" fill="#9a7656" opacity="0.75"/><ellipse cx="174.6" cy="20.8" rx="3.8" ry="0.9" fill="#8a6648" opacity="0.75"/><ellipse cx="63.8" cy="41.9" rx="3.6" ry="1.5" fill="#9a7656" opacity="0.75"/><ellipse cx="86.7" cy="76.3" rx="2.6" ry="0.9" fill="#3c2a1c" opacity="0.75"/><ellipse cx="191.6" cy="69.3" rx="3.3" ry="0.7" fill="#9a7656" opacity="0.75"/><ellipse cx="4.8" cy="64.3" rx="3.5" ry="1.4" fill="#7a5a3e" opacity="0.75"/><ellipse cx="72.9" cy="37.1" rx="2.0" ry="1.2" fill="#4a3322" opacity="0.75"/><ellipse cx="35.0" cy="72.1" rx="4.6" ry="0.9" fill="#8a6648" opacity="0.75"/><ellipse cx="43.8" cy="5.5" rx="2.1" ry="0.9" fill="#8a6648" opacity="0.75"/><ellipse cx="128.9" cy="76.4" rx="1.7" ry="1.1" fill="#7a5a3e" opacity="0.75"/><ellipse cx="16.6" cy="7.8" rx="4.1" ry="1.5" fill="#8a6648" opacity="0.75"/><ellipse cx="5.1" cy="62.1" rx="1.8" ry="1.4" fill="#3c2a1c" opacity="0.75"/><ellipse cx="48.6" cy="20.9" rx="4.2" ry="1.1" fill="#3c2a1c" opacity="0.75"/><ellipse cx="78.1" cy="32.1" rx="4.9" ry="1.3" fill="#3c2a1c" opacity="0.75"/><ellipse cx="96.6" cy="76.5" rx="1.8" ry="1.2" fill="#8a6648" opacity="0.75"/><ellipse cx="81.3" cy="78.5" rx="3.8" ry="1.5" fill="#3c2a1c" opacity="0.75"/><ellipse cx="165.1" cy="84.4" rx="4.9" ry="1.2" fill="#7a5a3e" opacity="0.75"/><ellipse cx="71.7" cy="1.0" rx="1.9" ry="1.5" fill="#4a3322" opacity="0.75"/><ellipse cx="48.7" cy="15.4" rx="3.7" ry="1.3" fill="#9a7656" opacity="0.75"/><ellipse cx="40.5" cy="40.4" rx="2.5" ry="1.6" fill="#8a6648" opacity="0.75"/><ellipse cx="93.3" cy="69.4" rx="2.6" ry="0.8" fill="#4a3322" opacity="0.75"/><ellipse cx="180.6" cy="71.5" rx="1.6" ry="1.1" fill="#8a6648" opacity="0.75"/><ellipse cx="64.2" cy="88.3" rx="5.3" ry="1.2" fill="#5a4030" opacity="0.8"/><ellipse cx="117.1" cy="98.4" rx="3.6" ry="1.1" fill="#5a4030" opacity="0.8"/><ellipse cx="70.9" cy="99.7" rx="3.9" ry="1.5" fill="#5a4030" opacity="0.8"/><ellipse cx="17.9" cy="97.8" rx="4.5" ry="0.9" fill="#5a4030" opacity="0.8"/><ellipse cx="113.8" cy="93.1" rx="2.3" ry="1.3" fill="#5a4030" opacity="0.8"/><ellipse cx="48.2" cy="92.3" rx="5.6" ry="0.7" fill="#2e2015" opacity="0.8"/><ellipse cx="193.2" cy="106.2" rx="3.8" ry="1.0" fill="#2e2015" opacity="0.8"/><ellipse cx="36.9" cy="100.4" rx="4.7" ry="1.1" fill="#2e2015" opacity="0.8"/><ellipse cx="6.9" cy="102.0" rx="4.3" ry="1.1" fill="#5a4030" opacity="0.8"/><ellipse cx="96.9" cy="96.9" rx="5.9" ry="0.9" fill="#5a4030" opacity="0.8"/><ellipse cx="19.3" cy="103.7" rx="2.9" ry="0.8" fill="#6e5038" opacity="0.8"/><ellipse cx="146.0" cy="94.9" rx="2.7" ry="0.8" fill="#2e2015" opacity="0.8"/><ellipse cx="178.1" cy="106.5" rx="4.8" ry="0.9" fill="#6e5038" opacity="0.8"/><ellipse cx="159.8" cy="100.2" rx="5.3" ry="1.5" fill="#2e2015" opacity="0.8"/><ellipse cx="49.3" cy="88.4" rx="4.1" ry="0.8" fill="#5a4030" opacity="0.8"/><ellipse cx="56.7" cy="99.2" rx="3.1" ry="0.7" fill="#2e2015" opacity="0.8"/><ellipse cx="56.4" cy="93.6" rx="4.0" ry="1.4" fill="#2e2015" opacity="0.8"/><ellipse cx="162.7" cy="98.9" rx="2.5" ry="0.7" fill="#6e5038" opacity="0.8"/><ellipse cx="32.2" cy="103.0" rx="4.8" ry="1.1" fill="#6e5038" opacity="0.8"/><ellipse cx="51.5" cy="89.1" rx="5.7" ry="0.9" fill="#6e5038" opacity="0.8"/><ellipse cx="46.2" cy="97.1" rx="3.5" ry="1.3" fill="#6e5038" opacity="0.8"/><ellipse cx="100.1" cy="99.3" rx="3.4" ry="0.8" fill="#6e5038" opacity="0.8"/><ellipse cx="21.8" cy="106.8" rx="4.6" ry="0.7" fill="#2e2015" opacity="0.8"/><ellipse cx="20.2" cy="99.3" rx="2.5" ry="1.5" fill="#5a4030" opacity="0.8"/><ellipse cx="70.0" cy="90.8" rx="5.8" ry="1.2" fill="#2e2015" opacity="0.8"/><ellipse cx="5.9" cy="99.4" rx="5.9" ry="1.2" fill="#6e5038" opacity="0.8"/><ellipse cx="107.4" cy="96.7" rx="4.7" ry="0.7" fill="#6e5038" opacity="0.8"/><ellipse cx="70.1" cy="98.0" rx="2.8" ry="1.2" fill="#5a4030" opacity="0.8"/><ellipse cx="27.6" cy="91.9" rx="4.8" ry="0.6" fill="#6e5038" opacity="0.8"/><ellipse cx="17.6" cy="106.0" rx="3.0" ry="0.8" fill="#5a4030" opacity="0.8"/><ellipse cx="185.9" cy="107.5" rx="5.8" ry="1.4" fill="#5a4030" opacity="0.8"/><ellipse cx="185.1" cy="88.4" rx="4.0" ry="1.1" fill="#6e5038" opacity="0.8"/><ellipse cx="113.1" cy="106.0" rx="3.3" ry="0.8" fill="#6e5038" opacity="0.8"/><ellipse cx="31.1" cy="106.3" rx="2.4" ry="0.9" fill="#5a4030" opacity="0.8"/><ellipse cx="189.5" cy="88.5" rx="2.1" ry="1.3" fill="#6e5038" opacity="0.8"/><ellipse cx="119.7" cy="104.9" rx="5.1" ry="1.2" fill="#2e2015" opacity="0.8"/><ellipse cx="0.1" cy="89.4" rx="5.2" ry="1.5" fill="#2e2015" opacity="0.8"/><ellipse cx="80.7" cy="94.7" rx="3.4" ry="0.6" fill="#2e2015" opacity="0.8"/><ellipse cx="51.9" cy="99.7" rx="4.1" ry="0.9" fill="#6e5038" opacity="0.8"/><ellipse cx="69.7" cy="101.0" rx="5.7" ry="1.0" fill="#2e2015" opacity="0.8"/><ellipse cx="29.7" cy="93.1" rx="3.9" ry="1.3" fill="#5a4030" opacity="0.8"/><ellipse cx="36.6" cy="101.6" rx="4.4" ry="1.1" fill="#6e5038" opacity="0.8"/><ellipse cx="50.5" cy="105.5" rx="2.7" ry="0.8" fill="#5a4030" opacity="0.8"/><ellipse cx="100.9" cy="102.8" rx="2.8" ry="0.6" fill="#2e2015" opacity="0.8"/><ellipse cx="106.9" cy="89.6" rx="5.1" ry="0.8" fill="#2e2015" opacity="0.8"/><ellipse cx="8.9" cy="99.1" rx="2.6" ry="1.2" fill="#2e2015" opacity="0.8"/><ellipse cx="180.4" cy="107.8" rx="3.5" ry="0.7" fill="#6e5038" opacity="0.8"/><ellipse cx="154.9" cy="94.8" rx="5.2" ry="0.9" fill="#5a4030" opacity="0.8"/><ellipse cx="111.3" cy="106.9" rx="2.3" ry="1.5" fill="#2e2015" opacity="0.8"/><ellipse cx="10.3" cy="88.7" rx="5.8" ry="1.0" fill="#2e2015" opacity="0.8"/><ellipse cx="28.4" cy="92.1" rx="5.5" ry="1.5" fill="#5a4030" opacity="0.8"/><ellipse cx="67.7" cy="106.6" rx="2.6" ry="1.2" fill="#2e2015" opacity="0.8"/><ellipse cx="38.1" cy="90.7" rx="4.7" ry="1.4" fill="#6e5038" opacity="0.8"/><ellipse cx="175.4" cy="101.4" rx="3.5" ry="1.3" fill="#5a4030" opacity="0.8"/><ellipse cx="29.0" cy="105.4" rx="5.9" ry="1.3" fill="#6e5038" opacity="0.8"/><ellipse cx="9.8" cy="94.1" rx="2.7" ry="0.7" fill="#6e5038" opacity="0.8"/><ellipse cx="103.4" cy="104.3" rx="3.8" ry="1.3" fill="#5a4030" opacity="0.8"/><ellipse cx="187.5" cy="89.6" rx="2.9" ry="0.7" fill="#5a4030" opacity="0.8"/><ellipse cx="193.2" cy="106.7" rx="4.7" ry="0.8" fill="#5a4030" opacity="0.8"/><ellipse cx="126.4" cy="90.1" rx="3.9" ry="1.4" fill="#6e5038" opacity="0.8"/>
  <path d="M0 92 Q50 88 100 94 Q150 90 198 92 V106 Q150 102 100 108 Q50 104 0 106 Z" fill="#3a281b" opacity="0.6"/>
  <ellipse cx="61.9" cy="109.7" rx="1.2" ry="0.9" fill="#b89470" opacity="0.9"/><ellipse cx="142.0" cy="121.2" rx="1.0" ry="0.6" fill="#d8b68c" opacity="0.9"/><ellipse cx="79.7" cy="130.4" rx="2.1" ry="0.9" fill="#b89470" opacity="0.9"/><ellipse cx="94.9" cy="111.6" rx="2.0" ry="1.0" fill="#d8b68c" opacity="0.9"/><ellipse cx="130.7" cy="126.4" rx="0.8" ry="1.0" fill="#7a5a3c" opacity="0.9"/><ellipse cx="9.8" cy="131.5" rx="1.9" ry="0.7" fill="#b89470" opacity="0.9"/><ellipse cx="157.4" cy="126.5" rx="1.9" ry="0.5" fill="#8c6a4a" opacity="0.9"/><ellipse cx="176.7" cy="129.3" rx="2.1" ry="0.8" fill="#8c6a4a" opacity="0.9"/><ellipse cx="141.2" cy="121.6" rx="0.9" ry="0.6" fill="#d8b68c" opacity="0.9"/><ellipse cx="28.7" cy="130.3" rx="1.9" ry="0.6" fill="#b89470" opacity="0.9"/><ellipse cx="52.8" cy="119.5" rx="0.9" ry="1.0" fill="#c8a47a" opacity="0.9"/><ellipse cx="40.5" cy="130.6" rx="0.9" ry="0.6" fill="#d8b68c" opacity="0.9"/><ellipse cx="53.4" cy="124.8" rx="0.8" ry="0.8" fill="#7a5a3c" opacity="0.9"/><ellipse cx="16.4" cy="125.7" rx="1.5" ry="0.8" fill="#c8a47a" opacity="0.9"/><ellipse cx="156.3" cy="116.1" rx="2.1" ry="0.6" fill="#7a5a3c" opacity="0.9"/><ellipse cx="41.3" cy="119.8" rx="1.5" ry="0.6" fill="#d8b68c" opacity="0.9"/><ellipse cx="62.6" cy="115.8" rx="1.5" ry="1.1" fill="#c8a47a" opacity="0.9"/><ellipse cx="71.2" cy="123.9" rx="0.9" ry="0.7" fill="#7a5a3c" opacity="0.9"/><ellipse cx="147.8" cy="126.7" rx="0.9" ry="0.8" fill="#7a5a3c" opacity="0.9"/><ellipse cx="140.9" cy="117.8" rx="1.1" ry="0.6" fill="#c8a47a" opacity="0.9"/><ellipse cx="169.5" cy="128.5" rx="1.8" ry="1.0" fill="#8c6a4a" opacity="0.9"/><ellipse cx="57.5" cy="114.9" rx="1.5" ry="0.7" fill="#d8b68c" opacity="0.9"/><ellipse cx="149.5" cy="120.1" rx="0.8" ry="0.6" fill="#7a5a3c" opacity="0.9"/><ellipse cx="144.8" cy="113.6" rx="2.1" ry="0.8" fill="#d8b68c" opacity="0.9"/><ellipse cx="88.5" cy="115.1" rx="0.9" ry="0.9" fill="#8c6a4a" opacity="0.9"/><ellipse cx="134.2" cy="124.5" rx="1.0" ry="0.7" fill="#7a5a3c" opacity="0.9"/><ellipse cx="117.4" cy="106.6" rx="1.0" ry="0.6" fill="#c8a47a" opacity="0.9"/><ellipse cx="85.9" cy="126.4" rx="1.2" ry="1.0" fill="#b89470" opacity="0.9"/><ellipse cx="27.5" cy="110.0" rx="0.9" ry="0.9" fill="#7a5a3c" opacity="0.9"/><ellipse cx="65.6" cy="116.0" rx="0.7" ry="0.7" fill="#d8b68c" opacity="0.9"/><ellipse cx="194.4" cy="126.9" rx="1.7" ry="0.9" fill="#c8a47a" opacity="0.9"/><ellipse cx="51.6" cy="109.5" rx="1.2" ry="0.8" fill="#b89470" opacity="0.9"/><ellipse cx="74.8" cy="118.8" rx="1.9" ry="1.0" fill="#b89470" opacity="0.9"/><ellipse cx="141.3" cy="111.4" rx="1.5" ry="0.7" fill="#8c6a4a" opacity="0.9"/><ellipse cx="69.8" cy="118.5" rx="0.9" ry="0.9" fill="#b89470" opacity="0.9"/><ellipse cx="197.7" cy="124.5" rx="2.1" ry="0.8" fill="#c8a47a" opacity="0.9"/><ellipse cx="124.2" cy="109.7" rx="0.8" ry="0.6" fill="#b89470" opacity="0.9"/><ellipse cx="82.7" cy="113.7" rx="0.8" ry="1.0" fill="#d8b68c" opacity="0.9"/><ellipse cx="91.7" cy="107.6" rx="2.2" ry="0.6" fill="#b89470" opacity="0.9"/><ellipse cx="107.6" cy="120.3" rx="1.5" ry="0.7" fill="#d8b68c" opacity="0.9"/><ellipse cx="119.1" cy="107.6" rx="1.9" ry="0.7" fill="#d8b68c" opacity="0.9"/><ellipse cx="47.7" cy="120.6" rx="1.9" ry="0.6" fill="#b89470" opacity="0.9"/><ellipse cx="160.6" cy="117.2" rx="1.3" ry="1.0" fill="#8c6a4a" opacity="0.9"/><ellipse cx="60.9" cy="123.5" rx="1.8" ry="0.7" fill="#b89470" opacity="0.9"/><ellipse cx="126.8" cy="126.1" rx="0.9" ry="0.7" fill="#c8a47a" opacity="0.9"/><ellipse cx="28.3" cy="115.2" rx="1.6" ry="0.6" fill="#b89470" opacity="0.9"/><ellipse cx="26.0" cy="111.1" rx="2.1" ry="0.5" fill="#c8a47a" opacity="0.9"/><ellipse cx="142.9" cy="126.8" rx="1.3" ry="0.8" fill="#c8a47a" opacity="0.9"/><ellipse cx="93.0" cy="115.9" rx="1.6" ry="0.9" fill="#7a5a3c" opacity="0.9"/><ellipse cx="148.8" cy="118.1" rx="2.2" ry="1.0" fill="#7a5a3c" opacity="0.9"/><ellipse cx="163.4" cy="107.4" rx="0.9" ry="1.1" fill="#d8b68c" opacity="0.9"/><ellipse cx="104.0" cy="116.5" rx="2.1" ry="0.7" fill="#c8a47a" opacity="0.9"/><ellipse cx="58.6" cy="121.9" rx="1.3" ry="0.7" fill="#d8b68c" opacity="0.9"/><ellipse cx="148.9" cy="112.8" rx="1.6" ry="0.5" fill="#c8a47a" opacity="0.9"/><ellipse cx="167.2" cy="111.0" rx="2.0" ry="1.1" fill="#7a5a3c" opacity="0.9"/><ellipse cx="137.6" cy="119.3" rx="1.1" ry="0.7" fill="#7a5a3c" opacity="0.9"/><ellipse cx="186.2" cy="129.5" rx="2.2" ry="0.9" fill="#d8b68c" opacity="0.9"/><ellipse cx="171.6" cy="116.2" rx="1.9" ry="0.6" fill="#7a5a3c" opacity="0.9"/><ellipse cx="112.2" cy="130.2" rx="0.8" ry="1.0" fill="#c8a47a" opacity="0.9"/><ellipse cx="174.7" cy="120.7" rx="1.4" ry="0.7" fill="#d8b68c" opacity="0.9"/><ellipse cx="4.7" cy="109.0" rx="1.4" ry="0.8" fill="#b89470" opacity="0.9"/><ellipse cx="78.7" cy="114.3" rx="1.6" ry="0.5" fill="#c8a47a" opacity="0.9"/><ellipse cx="90.1" cy="113.1" rx="1.2" ry="0.6" fill="#7a5a3c" opacity="0.9"/><ellipse cx="174.0" cy="109.9" rx="2.0" ry="0.9" fill="#c8a47a" opacity="0.9"/><ellipse cx="38.7" cy="128.3" rx="1.2" ry="0.8" fill="#8c6a4a" opacity="0.9"/><ellipse cx="125.8" cy="124.2" rx="1.5" ry="0.8" fill="#8c6a4a" opacity="0.9"/><ellipse cx="37.9" cy="129.5" rx="0.8" ry="0.6" fill="#d8b68c" opacity="0.9"/><ellipse cx="190.3" cy="111.9" rx="1.3" ry="1.0" fill="#d8b68c" opacity="0.9"/><ellipse cx="137.8" cy="131.2" rx="1.4" ry="0.5" fill="#8c6a4a" opacity="0.9"/><ellipse cx="170.6" cy="107.5" rx="1.7" ry="0.7" fill="#8c6a4a" opacity="0.9"/><ellipse cx="99.3" cy="112.6" rx="1.1" ry="1.0" fill="#b89470" opacity="0.9"/><ellipse cx="175.1" cy="121.1" rx="1.0" ry="0.7" fill="#8c6a4a" opacity="0.9"/><ellipse cx="132.1" cy="112.0" rx="1.7" ry="0.6" fill="#c8a47a" opacity="0.9"/><ellipse cx="87.2" cy="119.3" rx="1.5" ry="0.5" fill="#b89470" opacity="0.9"/><ellipse cx="116.1" cy="119.6" rx="1.3" ry="0.8" fill="#8c6a4a" opacity="0.9"/><ellipse cx="56.5" cy="125.9" rx="1.1" ry="0.7" fill="#b89470" opacity="0.9"/><ellipse cx="5.7" cy="126.9" rx="0.9" ry="1.0" fill="#b89470" opacity="0.9"/><ellipse cx="91.4" cy="125.8" rx="1.3" ry="1.1" fill="#7a5a3c" opacity="0.9"/><ellipse cx="11.9" cy="105.9" rx="1.9" ry="1.0" fill="#d8b68c" opacity="0.9"/><ellipse cx="130.3" cy="126.7" rx="1.5" ry="0.8" fill="#b89470" opacity="0.9"/><ellipse cx="147.4" cy="119.4" rx="1.6" ry="1.0" fill="#c8a47a" opacity="0.9"/><ellipse cx="120.4" cy="110.8" rx="1.4" ry="1.0" fill="#8c6a4a" opacity="0.9"/><ellipse cx="51.4" cy="119.8" rx="2.0" ry="0.9" fill="#d8b68c" opacity="0.9"/><ellipse cx="7.0" cy="121.3" rx="1.8" ry="0.8" fill="#8c6a4a" opacity="0.9"/><ellipse cx="64.4" cy="121.6" rx="1.6" ry="1.0" fill="#b89470" opacity="0.9"/><ellipse cx="87.5" cy="111.6" rx="1.9" ry="0.5" fill="#8c6a4a" opacity="0.9"/><ellipse cx="112.6" cy="119.8" rx="1.9" ry="0.6" fill="#8c6a4a" opacity="0.9"/><ellipse cx="10.7" cy="116.3" rx="1.7" ry="1.0" fill="#b89470" opacity="0.9"/><ellipse cx="154.6" cy="126.2" rx="1.4" ry="0.9" fill="#b89470" opacity="0.9"/><ellipse cx="34.0" cy="111.4" rx="0.9" ry="0.9" fill="#b89470" opacity="0.9"/><ellipse cx="155.8" cy="105.8" rx="1.3" ry="0.7" fill="#8c6a4a" opacity="0.9"/><ellipse cx="139.3" cy="131.8" rx="0.9" ry="1.0" fill="#b89470" opacity="0.9"/><ellipse cx="195.3" cy="108.2" rx="1.4" ry="0.9" fill="#c8a47a" opacity="0.9"/><ellipse cx="0.7" cy="115.9" rx="1.5" ry="0.6" fill="#b89470" opacity="0.9"/><ellipse cx="59.0" cy="116.3" rx="0.8" ry="0.5" fill="#b89470" opacity="0.9"/><ellipse cx="45.5" cy="111.3" rx="1.5" ry="0.6" fill="#7a5a3c" opacity="0.9"/><ellipse cx="17.0" cy="110.6" rx="1.2" ry="1.1" fill="#b89470" opacity="0.9"/><ellipse cx="43.2" cy="108.7" rx="1.6" ry="1.1" fill="#d8b68c" opacity="0.9"/><ellipse cx="112.3" cy="130.4" rx="2.0" ry="1.1" fill="#8c6a4a" opacity="0.9"/><ellipse cx="91.6" cy="115.4" rx="2.0" ry="0.7" fill="#c8a47a" opacity="0.9"/><ellipse cx="42.6" cy="114.1" rx="1.0" ry="0.8" fill="#8c6a4a" opacity="0.9"/><ellipse cx="95.1" cy="115.6" rx="1.6" ry="1.0" fill="#7a5a3c" opacity="0.9"/><ellipse cx="88.5" cy="132.8" rx="1.7" ry="1.0" fill="#8c6a4a" opacity="0.9"/><ellipse cx="107.0" cy="116.2" rx="0.8" ry="0.7" fill="#d8b68c" opacity="0.9"/><ellipse cx="123.0" cy="119.0" rx="1.8" ry="0.8" fill="#b89470" opacity="0.9"/><ellipse cx="182.9" cy="124.7" rx="1.1" ry="0.7" fill="#8c6a4a" opacity="0.9"/><ellipse cx="144.2" cy="126.5" rx="0.9" ry="0.6" fill="#c8a47a" opacity="0.9"/><ellipse cx="4.0" cy="113.3" rx="1.3" ry="0.5" fill="#7a5a3c" opacity="0.9"/><ellipse cx="64.4" cy="126.4" rx="1.5" ry="0.5" fill="#7a5a3c" opacity="0.9"/><ellipse cx="120.4" cy="118.2" rx="1.0" ry="0.8" fill="#8c6a4a" opacity="0.9"/><ellipse cx="6.3" cy="113.1" rx="1.3" ry="0.8" fill="#8c6a4a" opacity="0.9"/><ellipse cx="102.4" cy="119.9" rx="1.2" ry="0.8" fill="#7a5a3c" opacity="0.9"/><ellipse cx="29.1" cy="109.9" rx="1.1" ry="0.9" fill="#7a5a3c" opacity="0.9"/><ellipse cx="27.1" cy="119.0" rx="1.2" ry="0.6" fill="#d8b68c" opacity="0.9"/><ellipse cx="68.3" cy="110.3" rx="0.8" ry="0.5" fill="#7a5a3c" opacity="0.9"/><ellipse cx="112.1" cy="127.5" rx="2.2" ry="0.7" fill="#c8a47a" opacity="0.9"/><ellipse cx="182.0" cy="110.3" rx="1.7" ry="0.9" fill="#d8b68c" opacity="0.9"/><ellipse cx="46.5" cy="122.3" rx="0.8" ry="0.8" fill="#7a5a3c" opacity="0.9"/><ellipse cx="97.6" cy="118.2" rx="2.1" ry="0.7" fill="#d8b68c" opacity="0.9"/><ellipse cx="43.9" cy="130.8" rx="1.0" ry="1.0" fill="#d8b68c" opacity="0.9"/><ellipse cx="131.7" cy="111.0" rx="0.8" ry="0.7" fill="#7a5a3c" opacity="0.9"/><ellipse cx="159.2" cy="117.9" rx="1.1" ry="1.0" fill="#d8b68c" opacity="0.9"/><ellipse cx="138.6" cy="104.7" rx="1.3" ry="0.7" fill="#c8a47a" opacity="0.9"/><ellipse cx="180.7" cy="111.9" rx="1.3" ry="1.0" fill="#d8b68c" opacity="0.9"/><ellipse cx="92.8" cy="113.4" rx="1.1" ry="0.5" fill="#d8b68c" opacity="0.9"/><ellipse cx="64.1" cy="114.8" rx="1.1" ry="1.0" fill="#8c6a4a" opacity="0.9"/><ellipse cx="127.2" cy="115.1" rx="1.2" ry="1.0" fill="#c8a47a" opacity="0.9"/><ellipse cx="114.1" cy="131.3" rx="1.9" ry="0.9" fill="#b89470" opacity="0.9"/><ellipse cx="107.5" cy="121.8" rx="0.8" ry="0.5" fill="#7a5a3c" opacity="0.9"/><ellipse cx="174.2" cy="115.1" rx="2.1" ry="0.5" fill="#8c6a4a" opacity="0.9"/><ellipse cx="135.3" cy="111.9" rx="1.4" ry="0.8" fill="#c8a47a" opacity="0.9"/><ellipse cx="29.7" cy="109.6" rx="1.0" ry="0.9" fill="#8c6a4a" opacity="0.9"/><ellipse cx="103.1" cy="130.9" rx="2.2" ry="0.5" fill="#b89470" opacity="0.9"/><ellipse cx="97.7" cy="122.9" rx="1.5" ry="0.9" fill="#b89470" opacity="0.9"/><ellipse cx="175.1" cy="124.0" rx="1.9" ry="0.7" fill="#c8a47a" opacity="0.9"/><ellipse cx="175.5" cy="113.1" rx="1.8" ry="0.9" fill="#8c6a4a" opacity="0.9"/><ellipse cx="190.9" cy="127.9" rx="0.9" ry="0.9" fill="#7a5a3c" opacity="0.9"/><ellipse cx="159.4" cy="112.5" rx="1.3" ry="0.7" fill="#b89470" opacity="0.9"/><ellipse cx="98.7" cy="122.7" rx="1.2" ry="0.9" fill="#b89470" opacity="0.9"/><ellipse cx="146.0" cy="129.4" rx="2.2" ry="1.0" fill="#d8b68c" opacity="0.9"/><ellipse cx="22.3" cy="117.1" rx="1.9" ry="0.8" fill="#8c6a4a" opacity="0.9"/><ellipse cx="123.1" cy="116.0" rx="1.4" ry="0.7" fill="#7a5a3c" opacity="0.9"/><ellipse cx="100.5" cy="127.1" rx="1.3" ry="0.9" fill="#d8b68c" opacity="0.9"/><ellipse cx="72.8" cy="123.8" rx="1.0" ry="1.0" fill="#8c6a4a" opacity="0.9"/><ellipse cx="166.9" cy="128.0" rx="1.6" ry="0.8" fill="#8c6a4a" opacity="0.9"/><ellipse cx="123.4" cy="128.1" rx="1.9" ry="0.6" fill="#7a5a3c" opacity="0.9"/><ellipse cx="123.0" cy="112.5" rx="1.7" ry="1.1" fill="#7a5a3c" opacity="0.9"/><ellipse cx="115.9" cy="131.3" rx="2.2" ry="0.6" fill="#d8b68c" opacity="0.9"/><ellipse cx="83.0" cy="122.3" rx="1.3" ry="1.1" fill="#8c6a4a" opacity="0.9"/><ellipse cx="9.6" cy="124.7" rx="0.9" ry="0.5" fill="#d8b68c" opacity="0.9"/><ellipse cx="70.6" cy="119.6" rx="1.9" ry="0.7" fill="#c8a47a" opacity="0.9"/><ellipse cx="164.9" cy="128.8" rx="1.0" ry="0.5" fill="#7a5a3c" opacity="0.9"/><ellipse cx="158.5" cy="128.3" rx="1.1" ry="0.7" fill="#b89470" opacity="0.9"/><ellipse cx="80.8" cy="108.1" rx="1.6" ry="0.9" fill="#8c6a4a" opacity="0.9"/><ellipse cx="108.1" cy="127.2" rx="0.9" ry="0.6" fill="#c8a47a" opacity="0.9"/><ellipse cx="110.1" cy="130.0" rx="2.0" ry="0.8" fill="#8c6a4a" opacity="0.9"/><ellipse cx="64.1" cy="104.6" rx="1.5" ry="0.6" fill="#7a5a3c" opacity="0.9"/><ellipse cx="54.3" cy="110.6" rx="1.4" ry="0.7" fill="#d8b68c" opacity="0.9"/><ellipse cx="110.7" cy="108.4" rx="0.7" ry="1.0" fill="#c8a47a" opacity="0.9"/><ellipse cx="0.8" cy="113.8" rx="0.9" ry="1.0" fill="#7a5a3c" opacity="0.9"/><ellipse cx="95.9" cy="116.0" rx="1.9" ry="0.7" fill="#c8a47a" opacity="0.9"/><ellipse cx="42.6" cy="121.9" rx="1.9" ry="0.7" fill="#8c6a4a" opacity="0.9"/><ellipse cx="185.9" cy="129.1" rx="2.2" ry="0.8" fill="#c8a47a" opacity="0.9"/><ellipse cx="34.8" cy="104.8" rx="1.0" ry="0.6" fill="#c8a47a" opacity="0.9"/><ellipse cx="53.7" cy="104.7" rx="1.5" ry="0.5" fill="#7a5a3c" opacity="0.9"/><ellipse cx="2.1" cy="110.1" rx="2.1" ry="0.5" fill="#b89470" opacity="0.9"/><ellipse cx="52.5" cy="111.1" rx="2.1" ry="0.8" fill="#d8b68c" opacity="0.9"/><ellipse cx="159.0" cy="128.0" rx="1.9" ry="1.1" fill="#c8a47a" opacity="0.9"/><ellipse cx="185.4" cy="118.0" rx="2.0" ry="0.7" fill="#b89470" opacity="0.9"/><ellipse cx="4.7" cy="120.7" rx="1.0" ry="0.7" fill="#d8b68c" opacity="0.9"/><ellipse cx="100.2" cy="112.0" rx="2.2" ry="0.9" fill="#7a5a3c" opacity="0.9"/><ellipse cx="70.1" cy="112.1" rx="2.1" ry="0.7" fill="#c8a47a" opacity="0.9"/><ellipse cx="52.4" cy="110.2" rx="1.0" ry="0.5" fill="#8c6a4a" opacity="0.9"/><ellipse cx="108.2" cy="123.7" rx="1.0" ry="0.6" fill="#8c6a4a" opacity="0.9"/><ellipse cx="73.8" cy="109.3" rx="0.7" ry="0.7" fill="#c8a47a" opacity="0.9"/><ellipse cx="79.9" cy="113.3" rx="1.5" ry="1.1" fill="#8c6a4a" opacity="0.9"/><ellipse cx="4.1" cy="109.1" rx="0.8" ry="0.9" fill="#b89470" opacity="0.9"/><ellipse cx="195.5" cy="116.5" rx="2.1" ry="0.6" fill="#7a5a3c" opacity="0.9"/><ellipse cx="154.5" cy="129.7" rx="1.9" ry="0.5" fill="#7a5a3c" opacity="0.9"/><ellipse cx="187.6" cy="113.3" rx="1.0" ry="0.7" fill="#c8a47a" opacity="0.9"/><ellipse cx="29.3" cy="122.4" rx="1.3" ry="0.9" fill="#8c6a4a" opacity="0.9"/><ellipse cx="122.1" cy="114.0" rx="1.4" ry="0.9" fill="#7a5a3c" opacity="0.9"/><ellipse cx="100.0" cy="120.5" rx="0.9" ry="1.0" fill="#7a5a3c" opacity="0.9"/><ellipse cx="86.4" cy="117.6" rx="2.0" ry="0.8" fill="#7a5a3c" opacity="0.9"/><ellipse cx="118.9" cy="120.6" rx="1.5" ry="0.5" fill="#7a5a3c" opacity="0.9"/><ellipse cx="88.5" cy="121.2" rx="1.6" ry="1.1" fill="#8c6a4a" opacity="0.9"/><ellipse cx="106.3" cy="113.5" rx="1.1" ry="0.9" fill="#8c6a4a" opacity="0.9"/><ellipse cx="145.9" cy="132.7" rx="1.3" ry="1.0" fill="#8c6a4a" opacity="0.9"/><ellipse cx="149.1" cy="130.0" rx="0.9" ry="0.6" fill="#8c6a4a" opacity="0.9"/><ellipse cx="164.2" cy="127.1" rx="1.5" ry="1.1" fill="#c8a47a" opacity="0.9"/><ellipse cx="36.6" cy="105.1" rx="1.2" ry="0.8" fill="#d8b68c" opacity="0.9"/><ellipse cx="89.9" cy="119.6" rx="2.0" ry="0.6" fill="#d8b68c" opacity="0.9"/><ellipse cx="190.4" cy="110.9" rx="0.9" ry="0.8" fill="#7a5a3c" opacity="0.9"/><ellipse cx="173.6" cy="106.1" rx="1.4" ry="0.5" fill="#b89470" opacity="0.9"/><ellipse cx="192.6" cy="105.9" rx="2.1" ry="1.0" fill="#8c6a4a" opacity="0.9"/><ellipse cx="19.9" cy="105.1" rx="1.2" ry="1.0" fill="#d8b68c" opacity="0.9"/><ellipse cx="23.2" cy="109.3" rx="1.3" ry="1.0" fill="#b89470" opacity="0.9"/><ellipse cx="92.2" cy="118.2" rx="0.8" ry="0.9" fill="#b89470" opacity="0.9"/><ellipse cx="124.6" cy="129.4" rx="1.8" ry="0.6" fill="#7a5a3c" opacity="0.9"/><ellipse cx="74.9" cy="127.7" rx="1.7" ry="1.0" fill="#d8b68c" opacity="0.9"/><ellipse cx="130.3" cy="110.0" rx="1.0" ry="1.0" fill="#8c6a4a" opacity="0.9"/><ellipse cx="137.4" cy="117.5" rx="0.9" ry="0.6" fill="#d8b68c" opacity="0.9"/><ellipse cx="120.8" cy="114.4" rx="1.0" ry="1.1" fill="#8c6a4a" opacity="0.9"/><ellipse cx="145.8" cy="114.4" rx="1.2" ry="0.7" fill="#8c6a4a" opacity="0.9"/><ellipse cx="14.1" cy="111.7" rx="1.3" ry="0.9" fill="#d8b68c" opacity="0.9"/><ellipse cx="90.4" cy="118.7" rx="2.1" ry="0.7" fill="#7a5a3c" opacity="0.9"/><ellipse cx="46.5" cy="120.8" rx="1.1" ry="1.0" fill="#d8b68c" opacity="0.9"/><ellipse cx="188.5" cy="106.3" rx="1.7" ry="0.6" fill="#7a5a3c" opacity="0.9"/><ellipse cx="76.8" cy="125.6" rx="1.6" ry="0.8" fill="#c8a47a" opacity="0.9"/><ellipse cx="72.7" cy="113.7" rx="1.6" ry="0.9" fill="#d8b68c" opacity="0.9"/><ellipse cx="58.0" cy="124.2" rx="1.7" ry="0.6" fill="#7a5a3c" opacity="0.9"/><ellipse cx="74.2" cy="121.2" rx="2.0" ry="0.7" fill="#d8b68c" opacity="0.9"/><ellipse cx="67.6" cy="127.8" rx="2.0" ry="0.9" fill="#b89470" opacity="0.9"/><ellipse cx="130.2" cy="117.1" rx="1.0" ry="1.0" fill="#c8a47a" opacity="0.9"/><ellipse cx="74.1" cy="125.0" rx="1.7" ry="0.7" fill="#c8a47a" opacity="0.9"/><ellipse cx="132.3" cy="108.5" rx="0.8" ry="0.6" fill="#b89470" opacity="0.9"/><ellipse cx="62.6" cy="123.5" rx="1.6" ry="1.1" fill="#c8a47a" opacity="0.9"/><ellipse cx="196.5" cy="115.5" rx="1.9" ry="0.9" fill="#c8a47a" opacity="0.9"/><ellipse cx="197.5" cy="105.9" rx="1.4" ry="0.7" fill="#8c6a4a" opacity="0.9"/><ellipse cx="102.5" cy="120.9" rx="1.4" ry="1.0" fill="#b89470" opacity="0.9"/><ellipse cx="78.1" cy="125.5" rx="0.8" ry="0.6" fill="#b89470" opacity="0.9"/><ellipse cx="155.7" cy="130.3" rx="1.7" ry="1.1" fill="#7a5a3c" opacity="0.9"/><ellipse cx="153.6" cy="107.5" rx="1.4" ry="0.5" fill="#d8b68c" opacity="0.9"/><ellipse cx="187.0" cy="130.0" rx="0.7" ry="0.7" fill="#b89470" opacity="0.9"/><ellipse cx="111.1" cy="132.3" rx="1.9" ry="0.6" fill="#b89470" opacity="0.9"/><ellipse cx="111.7" cy="106.0" rx="1.1" ry="0.9" fill="#b89470" opacity="0.9"/><ellipse cx="101.4" cy="112.5" rx="1.9" ry="0.6" fill="#7a5a3c" opacity="0.9"/><ellipse cx="92.3" cy="132.7" rx="1.6" ry="0.6" fill="#c8a47a" opacity="0.9"/><ellipse cx="91.0" cy="128.7" rx="0.9" ry="1.0" fill="#8c6a4a" opacity="0.9"/><ellipse cx="28.5" cy="120.4" rx="1.0" ry="0.9" fill="#c8a47a" opacity="0.9"/><ellipse cx="81.8" cy="104.3" rx="0.9" ry="1.0" fill="#7a5a3c" opacity="0.9"/><ellipse cx="31.0" cy="119.4" rx="0.7" ry="0.6" fill="#d8b68c" opacity="0.9"/><ellipse cx="180.6" cy="119.8" rx="1.8" ry="1.0" fill="#7a5a3c" opacity="0.9"/><ellipse cx="82.4" cy="106.3" rx="1.1" ry="0.6" fill="#7a5a3c" opacity="0.9"/><ellipse cx="65.1" cy="118.2" rx="1.7" ry="1.0" fill="#8c6a4a" opacity="0.9"/><ellipse cx="112.4" cy="118.5" rx="2.1" ry="0.7" fill="#d8b68c" opacity="0.9"/><ellipse cx="52.9" cy="121.4" rx="1.0" ry="0.6" fill="#7a5a3c" opacity="0.9"/><ellipse cx="76.2" cy="122.8" rx="1.2" ry="0.6" fill="#d8b68c" opacity="0.9"/><ellipse cx="165.5" cy="105.8" rx="1.5" ry="0.8" fill="#7a5a3c" opacity="0.9"/><ellipse cx="162.1" cy="123.6" rx="1.8" ry="0.5" fill="#d8b68c" opacity="0.9"/><ellipse cx="95.8" cy="110.7" rx="1.8" ry="0.8" fill="#c8a47a" opacity="0.9"/><ellipse cx="73.9" cy="121.2" rx="0.9" ry="0.9" fill="#d8b68c" opacity="0.9"/><ellipse cx="190.2" cy="114.6" rx="1.6" ry="0.7" fill="#d8b68c" opacity="0.9"/><ellipse cx="41.5" cy="126.1" rx="0.8" ry="0.6" fill="#c8a47a" opacity="0.9"/><ellipse cx="102.2" cy="125.9" rx="0.8" ry="0.6" fill="#d8b68c" opacity="0.9"/><ellipse cx="116.7" cy="127.4" rx="2.1" ry="0.9" fill="#d8b68c" opacity="0.9"/><ellipse cx="79.7" cy="112.3" rx="1.7" ry="0.6" fill="#8c6a4a" opacity="0.9"/><ellipse cx="164.6" cy="113.5" rx="1.2" ry="1.0" fill="#d8b68c" opacity="0.9"/><ellipse cx="127.2" cy="105.6" rx="1.8" ry="0.5" fill="#b89470" opacity="0.9"/><ellipse cx="16.6" cy="108.0" rx="1.2" ry="0.9" fill="#b89470" opacity="0.9"/><ellipse cx="185.0" cy="125.8" rx="1.6" ry="0.5" fill="#7a5a3c" opacity="0.9"/><ellipse cx="82.8" cy="123.7" rx="2.2" ry="1.1" fill="#c8a47a" opacity="0.9"/><ellipse cx="34.2" cy="106.4" rx="1.7" ry="0.6" fill="#7a5a3c" opacity="0.9"/><ellipse cx="134.1" cy="127.2" rx="1.4" ry="1.0" fill="#c8a47a" opacity="0.9"/><ellipse cx="165.4" cy="131.7" rx="1.2" ry="1.0" fill="#c8a47a" opacity="0.9"/><ellipse cx="139.2" cy="115.5" rx="1.7" ry="0.9" fill="#c8a47a" opacity="0.9"/><ellipse cx="182.6" cy="110.1" rx="1.3" ry="0.8" fill="#c8a47a" opacity="0.9"/><ellipse cx="30.7" cy="111.9" rx="1.3" ry="1.0" fill="#7a5a3c" opacity="0.9"/><ellipse cx="39.7" cy="124.4" rx="1.4" ry="0.8" fill="#7a5a3c" opacity="0.9"/><ellipse cx="101.3" cy="118.0" rx="1.5" ry="1.0" fill="#b89470" opacity="0.9"/>
  <!-- tail -->
  <path d="M165 55 Q172 62 178.7 69.5 Q183.4 80 186.3 100 Q184 102 181.5 101 Q179 90 176.8 84.8 Q172 75 166 68 Z" fill="#d98a2c"/>
  <!-- body -->
  <path d="M47 28.6 L58.7 23.8 Q60 22 62.5 21.9 Q72 19 83.4 18.1 Q100 16 112 16.2 Q128 15 142.5 15.2 Q150 16 153.9 20 Q160 26 163.4 33.3 Q166 40 167.2 46.7 Q168 53 169.1 58.1 Q166 64 154 65.7 Q148 68 146.3 71.4 L125.3 61.9 Q122 63 121.5 63.8 Q112 66 104.4 67.6 L85.3 71.4 Q78 66 70.1 61.9 Q60 61 53 60 Q47 61 47.2 60 Q40 60 37.7 58.1 Q34 45 35.8 31.4 Q34 26 34.9 23.8 Q40 25 47 28.6 Z" fill="url(#tg)"/>
  <path d="M70 50 Q95 62 121 60 Q140 58 160 56 Q150 64 146 66 Q130 62 121 64 Q100 68 85 70 Q76 64 70 60 Z" fill="#f3d7a0" opacity="0.8"/>
  <!-- rear leg -->
  <path d="M125.3 61.9 Q136 60 146.3 64 Q147 90 144.4 103.8 Q142 110 138.7 111.4 L127.2 109.5 Q130 100 129.1 82.9 Q127 72 125.3 61.9 Z" fill="#efdcb4"/>
  <!-- far front leg -->
  <path d="M85.3 67 Q95 66 104.4 67.6 Q102 90 100.6 111.4 Q96 115 87.2 115.2 Q90 100 89.1 82.9 Q87 76 85.3 71.4 Z" fill="#eaa646"/>
  <!-- near front leg -->
  <path d="M54.9 61.9 Q62 58 70 62 Q72 64 68.2 65.7 Q60 85 51 100 Q47 107 43.4 111.4 L28.2 111.4 Q34 106 41.5 96.2 Q47 82 51 69.5 Z" fill="#f2e6cc"/>
  <!-- face -->
  <path d="M36 32 Q44 28 57 31 Q59 44 55 54 Q50 60 44 59 Q38 56 37 48 Z" fill="#d07e2c"/>
  <path d="M37 36 Q40 33 44 36 Q42 42 38 44 Z M50 36 Q54 33 57 36 L56 44 Q52 42 50 36 Z" fill="#f2e8d4"/>
  <path d="M37 48 Q42 56 50 58 Q46 62 40 60 Q36 56 37 48 Z" fill="#f0e6d0"/>
  <path d="M52 54 Q58 50 59 56 Q56 62 50 60 Z" fill="#f0e6d0"/>
  <path d="M34 24 Q36 20 41 23 L39 28 Z M56 24 Q59 20 61 24 L59 28 Z" fill="#e8dcc6"/>
  <g stroke="#23170e" fill="none" stroke-linecap="round" opacity="0.85"><path d="M61.9 23.2 Q64.1 41.7 64.2 60.3" stroke-width="1.27"/><path d="M65.8 21.7 Q67.4 39.0 65.3 56.2" stroke-width="1.20"/><path d="M67.5 23.0 Q69.7 31.4 69.3 39.8" stroke-width="0.82"/><path d="M71.0 22.6 Q72.6 35.0 71.1 47.5" stroke-width="0.98"/><path d="M73.3 21.6 Q76.4 36.5 74.5 51.4" stroke-width="1.17"/><path d="M76.7 21.5 Q79.7 40.7 77.6 59.8" stroke-width="1.38"/><path d="M79.9 21.2 Q84.7 40.8 81.9 60.5" stroke-width="1.03"/><path d="M83.6 20.6 Q86.1 33.7 83.2 46.9" stroke-width="1.78"/><path d="M86.4 20.5 Q91.2 34.9 86.4 49.2" stroke-width="0.96"/><path d="M88.4 21.3 Q91.6 31.8 90.6 42.4" stroke-width="1.36"/><path d="M92.0 20.4 Q94.5 25.4 93.0 30.4" stroke-width="1.30"/><path d="M95.2 20.3 Q98.4 26.7 96.5 33.1" stroke-width="1.30"/><path d="M98.8 19.6 Q103.1 31.7 98.6 43.8" stroke-width="0.88"/><path d="M101.5 20.4 Q104.8 29.5 102.0 38.6" stroke-width="1.70"/><path d="M104.1 20.5 Q106.6 33.4 106.0 46.2" stroke-width="1.28"/><path d="M107.0 19.1 Q111.4 27.2 108.8 35.4" stroke-width="1.02"/><path d="M110.8 19.9 Q114.8 35.9 112.6 51.9" stroke-width="1.60"/><path d="M113.5 18.2 Q115.8 36.3 115.7 54.3" stroke-width="1.10"/><path d="M115.2 18.8 Q118.9 29.3 117.4 39.7" stroke-width="1.59"/><path d="M119.7 18.7 Q121.6 24.7 122.1 30.7" stroke-width="1.47"/><path d="M122.6 17.8 Q126.7 25.7 125.0 33.7" stroke-width="1.49"/><path d="M125.2 17.2 Q129.7 33.8 126.9 50.4" stroke-width="0.86"/><path d="M128.5 18.4 Q132.2 32.5 129.2 46.6" stroke-width="1.74"/><path d="M130.8 17.2 Q135.1 22.6 130.6 27.9" stroke-width="0.96"/><path d="M134.2 17.8 Q136.9 33.9 134.2 50.0" stroke-width="1.32"/><path d="M136.5 17.3 Q139.2 33.3 138.7 49.3" stroke-width="1.74"/><path d="M140.7 16.4 Q145.5 36.6 142.4 56.9" stroke-width="1.42"/><path d="M142.7 17.4 Q144.4 30.8 144.8 44.1" stroke-width="1.29"/><path d="M146.1 19.5 Q148.3 36.4 147.1 53.3" stroke-width="1.05"/><path d="M148.6 20.4 Q151.3 26.6 149.4 32.7" stroke-width="0.85"/><path d="M152.7 23.1 Q155.0 34.8 153.4 46.4" stroke-width="1.21"/><path d="M155.7 23.6 Q159.9 35.5 156.7 47.5" stroke-width="1.49"/><path d="M158.2 26.5 Q161.6 45.9 160.7 65.4" stroke-width="1.05"/><path d="M161.0 26.4 Q163.1 43.7 162.0 60.9" stroke-width="0.86"/><path d="M163.6 28.8 Q167.8 45.4 164.9 62.0" stroke-width="1.12"/><path d="M167.3 30.1 Q170.5 42.0 169.7 53.9" stroke-width="0.91"/></g>
  <g stroke="#1e150f" fill="none" stroke-linecap="round">
    <g stroke-width="1.5">
    <path d="M54 70 L64 75"/><path d="M51 79 L60 84"/><path d="M47 88 L56 92"/><path d="M44 96 L51 99"/><path d="M39 103 L46 106"/>
    <path d="M128 70 L146 74"/><path d="M129 80 L146 83"/><path d="M130 90 L145 92"/><path d="M131 100 L144 101"/>
    <path d="M170 64 L174 60"/><path d="M175 74 L180 70"/><path d="M178 84 L184 81"/><path d="M180 93 L185 91"/>
    <path d="M39 38 L45 40"/><path d="M50 36 L55 41"/><path d="M40 45 L45 44"/><path d="M51 44 L56 43"/>
    <path d="M60 26 L62 42"/><path d="M56 46 Q60 52 62 58"/>
    </g>
  </g>
<rect width="198" height="133" fill="#000" filter="url(#grain2)" opacity="0.35"/></svg>
<div class="abs nw" style="left:813px;top:427.5px;width:199px;text-align:center;font-size:9.6px;line-height:14px;color:#202122">(<i>P. tigris tigris</i>)</div>
<div class="abs" style="left:813px;top:445px;width:199px;height:18px;background:#d3d3a4"></div>
<div class="abs nw" style="left:813px;top:445px;width:199px;text-align:center;font-size:11.1px;line-height:18px;font-weight:bold;color:#ba3030">Амандық күйі</div>
<!-- status -->
<svg class="abs" style="left:813px;top:464px" width="199" height="46" viewBox="0 0 199 46">
  <g font-family="Liberation Sans" font-size="7.8" fill="#333" text-anchor="middle">
    <text x="30" y="16.5">Extinct</text>
    <text x="98" y="16.5">Threatened</text>
    <text x="166" y="9.5">Least</text>
    <text x="166" y="16.5">Concern</text>
  </g>
  <path d="M30 19 V23 M166 19 V23" stroke="#333" stroke-width="0.8"/>
  <path d="M66 24.5 Q66 21 70 21 H94 Q98 21 98 18.5 Q98 21 102 21 H126 Q130 21 130 24.5" fill="none" stroke="#111" stroke-width="1.1"/>
  <g stroke="#999" stroke-width="0.7" fill="#fff">
    <circle cx="29.2" cy="34.8" r="8.8"/><circle cx="52.2" cy="34.8" r="8.8"/><circle cx="75" cy="34.8" r="8.8"/>
    <circle cx="98.2" cy="34.8" r="8.8" fill="#cc6633" stroke="#cc6633"/><circle cx="122" cy="34.8" r="8.8"/>
    <circle cx="144.2" cy="34.8" r="8.8"/><circle cx="167.2" cy="34.8" r="8.8"/>
  </g>
  <g font-family="Liberation Sans" font-weight="bold" font-size="8.2" fill="#333" text-anchor="middle">
    <text x="29.2" y="37.6">EX</text><text x="52.2" y="37.6">EW</text><text x="75" y="37.6">CR</text>
    <text x="98.2" y="37.6" fill="#f6c9a8">EN</text><text x="122" y="37.6">VU</text><text x="144.2" y="37.6">NT</text><text x="167.2" y="37.6">LC</text>
  </g>
</svg>
<div class="abs nw" style="left:833px;top:512px;font-size:11.1px;line-height:14px;color:#ba3030">Жойылу қаупіндегілер (<span style="font-size:9.4px">IUCN</span>) <sup style="font-size:8px;line-height:0;color:#3366cc">[1]</sup></div>
<div class="abs" style="left:813px;top:531px;width:199px;height:18px;background:#d3d3a4"></div>
<div class="abs nw" style="left:813px;top:531px;width:199px;text-align:center;font-size:11.1px;line-height:18px;font-weight:bold;color:#ba3030">Ғылыми топтастыруы</div>
<div class="abs nw" style="left:835px;top:555.7px;font-size:11.1px;line-height:14px;color:#202122">Дүниесі:</div>
<div class="abs nw" style="left:902px;top:555.7px;font-size:11.1px;line-height:14px;color:#3366cc">Жануарлар</div>
<div class="abs nw" style="left:835px;top:576.8px;font-size:11.1px;line-height:14px;color:#202122">Жамағаты:</div>
<div class="abs nw" style="left:902px;top:576.8px;font-size:11.1px;line-height:14px;color:#3366cc">Хордалылар</div>
<div class="abs nw" style="left:835px;top:598.0px;font-size:11.1px;line-height:14px;color:#202122">Табы:</div>
<div class="abs nw" style="left:902px;top:598.0px;font-size:11.1px;line-height:14px;color:#3366cc">Сүтқоректілер</div>
<div class="abs nw" style="left:835px;top:619.1px;font-size:11.1px;line-height:14px;color:#202122">Сабы:</div>
<div class="abs nw" style="left:902px;top:619.1px;font-size:11.1px;line-height:14px;color:#3366cc">Жыртқыштар</div>
<div class="abs nw" style="left:835px;top:640.3px;font-size:11.1px;line-height:14px;color:#202122">Тұқымдасы:</div>
<div class="abs nw" style="left:902px;top:640.3px;font-size:11.1px;line-height:14px;color:#3366cc">Мысықтәрізділер</div>
<div class="abs nw" style="left:835px;top:661.4px;font-size:11.1px;line-height:14px;color:#202122">Тегі:</div>
<div class="abs nw" style="left:902px;top:661.4px;font-size:11.1px;line-height:14px;color:#3366cc"><i>Panthera</i></div>
<div class="abs nw" style="left:835px;top:682.5px;font-size:11.1px;line-height:14px;color:#202122">Түрі:</div>
<div class="abs nw" style="left:902px;top:682.5px;font-size:11.1px;line-height:14px;color:#3366cc"><b style="color:#202122"><i>P. tigris</i></b></div>


<div class="abs" style="left:813px;top:704.5px;width:199px;height:18px;background:#d3d3a4"></div>
<div class="abs nw" style="left:813px;top:704px;width:199px;text-align:center;font-size:11.1px;line-height:18px;font-weight:bold;color:#ba3030">Екі-есімді атауы</div>

<!-- ============ RIGHT SIDEBAR ============ -->
<div class="abs nw" style="left:1048px;top:227px;font-size:11.1px;line-height:15px;font-weight:bold;color:#202122">Көрініс</div>
<div class="abs" style="left:1097px;top:226px;width:45px;height:17px;border-radius:2px;background:#eaecf0"></div>
<div class="abs nw" style="left:1097px;top:228.5px;width:45px;text-align:center;font-size:9.6px;line-height:13px;color:#202122">жасыру</div>
<div class="abs" style="left:1048px;top:248px;width:130px;height:1px;background:#eaecf0"></div>
<div class="abs nw" style="left:1048px;top:257px;font-size:11.1px;line-height:15px;color:#54595d">Мәтін</div>
<div class="abs" style="left:1048px;top:276px;width:130px;height:1px;background:#eaecf0"></div>
<div class="abs nw" style="left:1048px;top:366px;font-size:11.1px;line-height:15px;color:#54595d">Ені</div>
<div class="abs" style="left:1048px;top:384px;width:130px;height:1px;background:#eaecf0"></div>
<div class="abs nw" style="left:1048px;top:448px;font-size:11.1px;line-height:15px;color:#54595d">Түс (beta)</div>
<div class="abs" style="left:1048px;top:467px;width:130px;height:1px;background:#eaecf0"></div>
<div class="abs" style="left:1048px;top:285.8px;width:16.4px;height:16.4px;border-radius:50%;border:1px solid #72777d;background:#fff"></div>
<div class="abs nw" style="left:1070px;top:286.5px;font-size:11.1px;line-height:15px;color:#202122">Ұсақ</div>
<div class="abs" style="left:1048px;top:311.0px;width:16.4px;height:16.4px;border-radius:50%;border:4.7px solid #3366cc;background:#fff"></div>
<div class="abs nw" style="left:1070px;top:311.7px;font-size:11.1px;line-height:15px;color:#202122">Орташа</div>
<div class="abs" style="left:1048px;top:336.2px;width:16.4px;height:16.4px;border-radius:50%;border:1px solid #72777d;background:#fff"></div>
<div class="abs nw" style="left:1070px;top:336.9px;font-size:11.1px;line-height:15px;color:#202122">Ірі</div>
<div class="abs" style="left:1048px;top:394.2px;width:16.4px;height:16.4px;border-radius:50%;border:4.7px solid #3366cc;background:#fff"></div>
<div class="abs nw" style="left:1070px;top:394.9px;font-size:11.1px;line-height:15px;color:#202122">Қалыпты</div>
<div class="abs" style="left:1048px;top:419.3px;width:16.4px;height:16.4px;border-radius:50%;border:1px solid #72777d;background:#fff"></div>
<div class="abs nw" style="left:1070px;top:420.0px;font-size:11.1px;line-height:15px;color:#202122">Кең</div>
<div class="abs" style="left:1048px;top:477.3px;width:16.4px;height:16.4px;border-radius:50%;border:1px solid #72777d;background:#fff"></div>
<div class="abs nw" style="left:1070px;top:478.0px;font-size:11.1px;line-height:15px;color:#202122">Өздігінен</div>
<div class="abs" style="left:1048px;top:502.5px;width:16.4px;height:16.4px;border-radius:50%;border:4.7px solid #3366cc;background:#fff"></div>
<div class="abs nw" style="left:1070px;top:503.2px;font-size:11.1px;line-height:15px;color:#202122">Жарық</div>
<div class="abs" style="left:1048px;top:527.6px;width:16.4px;height:16.4px;border-radius:50%;border:1px solid #72777d;background:#fff"></div>
<div class="abs nw" style="left:1070px;top:528.3px;font-size:11.1px;line-height:15px;color:#202122">Қараңғы</div>

<!-- ============ POPUP ============ -->
<div id="popup" class="abs" style="left:48.5px;top:125.5px;width:282.5px;height:174px;background:#fff;border:1px solid rgba(0,0,0,0.11);border-radius:10px;box-shadow:0 4px 14px rgba(0,0,0,.15)"></div>
<svg class="abs" style="left:38px;top:145px" width="16" height="28" viewBox="0 0 16 28"><path d="M14 1 L11 1.5 L2.2 12 Q1 13.4 2.2 14.8 L11 25 L14 25.5 Z" fill="#fff"/><path d="M11.2 1.8 L2.2 12 Q1 13.4 2.2 14.8 L11.2 24.5" fill="none" stroke="rgba(0,0,0,0.11)" stroke-width="1"/></svg>
<div class="abs nw" style="left:78px;top:137px;font-size:14.5px;line-height:18px;color:#000">Скриншот жасау</div>
<div class="abs nw" style="left:117px;top:173px;font-size:12.3px;line-height:16px;color:#000;letter-spacing:-0.3px">Ерекшеленген аймақ</div>
<div class="abs nw" style="left:117px;top:204.7px;font-size:12.3px;line-height:16px;color:#000;letter-spacing:-0.3px">Толық экран</div>
<div class="abs nw" style="left:117px;top:236.7px;font-size:12.3px;line-height:16px;color:#000;letter-spacing:-0.3px">Веб-парақша</div>
<div class="abs nw" style="left:117px;top:267.7px;font-size:12.3px;line-height:16px;color:#000;letter-spacing:-0.3px">Баптаулар</div>
<div class="abs nw" style="right:1049px;top:174px;font-size:10.75px;line-height:14px;color:#a2a2a2">Alt+PrtScr</div>
<div class="abs nw" style="right:1049px;top:205px;font-size:10.75px;line-height:14px;color:#a2a2a2">PrtScr</div>
<div class="abs nw" style="right:1049px;top:237px;font-size:10.75px;line-height:14px;color:#a2a2a2">Ctrl+PrtScr</div>
<!-- icons -->
<svg class="abs" style="left:80px;top:172px" width="20" height="18" viewBox="0 0 20 18"><rect x="1" y="1" width="14" height="13" rx="1.5" fill="none" stroke="#333" stroke-width="1.1" stroke-dasharray="1.3 1.3"/><path d="M15 12 V17 M12.5 14.5 H17.5" stroke="#222" stroke-width="1.3"/></svg>
<svg class="abs" style="left:80px;top:204px" width="18" height="16" viewBox="0 0 18 16"><rect x="1" y="1.5" width="16" height="13" rx="3" fill="none" stroke="#333" stroke-width="1.2"/><path d="M1.5 10 H16.5" stroke="#333" stroke-width="1.2"/><path d="M12 4 H15" stroke="#333" stroke-width="1"/></svg>
<svg class="abs" style="left:81px;top:235px" width="16" height="17" viewBox="0 0 16 17"><rect x="1" y="1" width="13.5" height="15" rx="3" fill="none" stroke="#333" stroke-width="1.2"/><path d="M4 7.5 H10 M4 10 H9 M4 12.5 H7" stroke="#333" stroke-width="1.1"/><path d="M10 3.5 H12.5" stroke="#333" stroke-width="1"/></svg>
<svg class="abs" style="left:80px;top:266px" width="18" height="18" viewBox="0 0 24 24"><path d="M12 2.5 l1.6 .3 .5 2.4 1.6 .7 2.1-1.3 2.3 2.3 -1.3 2.1 .7 1.6 2.4 .5 v3.2 l-2.4 .5 -.7 1.6 1.3 2.1 -2.3 2.3 -2.1-1.3 -1.6 .7 -.5 2.4 h-3.2 l-.5-2.4 -1.6-.7 -2.1 1.3 -2.3-2.3 1.3-2.1 -.7-1.6 -2.4-.5 v-3.2 l2.4-.5 .7-1.6 -1.3-2.1 2.3-2.3 2.1 1.3 1.6-.7 .5-2.4 z" fill="none" stroke="#333" stroke-width="1.5" stroke-linejoin="round"/><circle cx="12" cy="12" r="3.3" fill="none" stroke="#333" stroke-width="1.5"/></svg>

</body></html>
